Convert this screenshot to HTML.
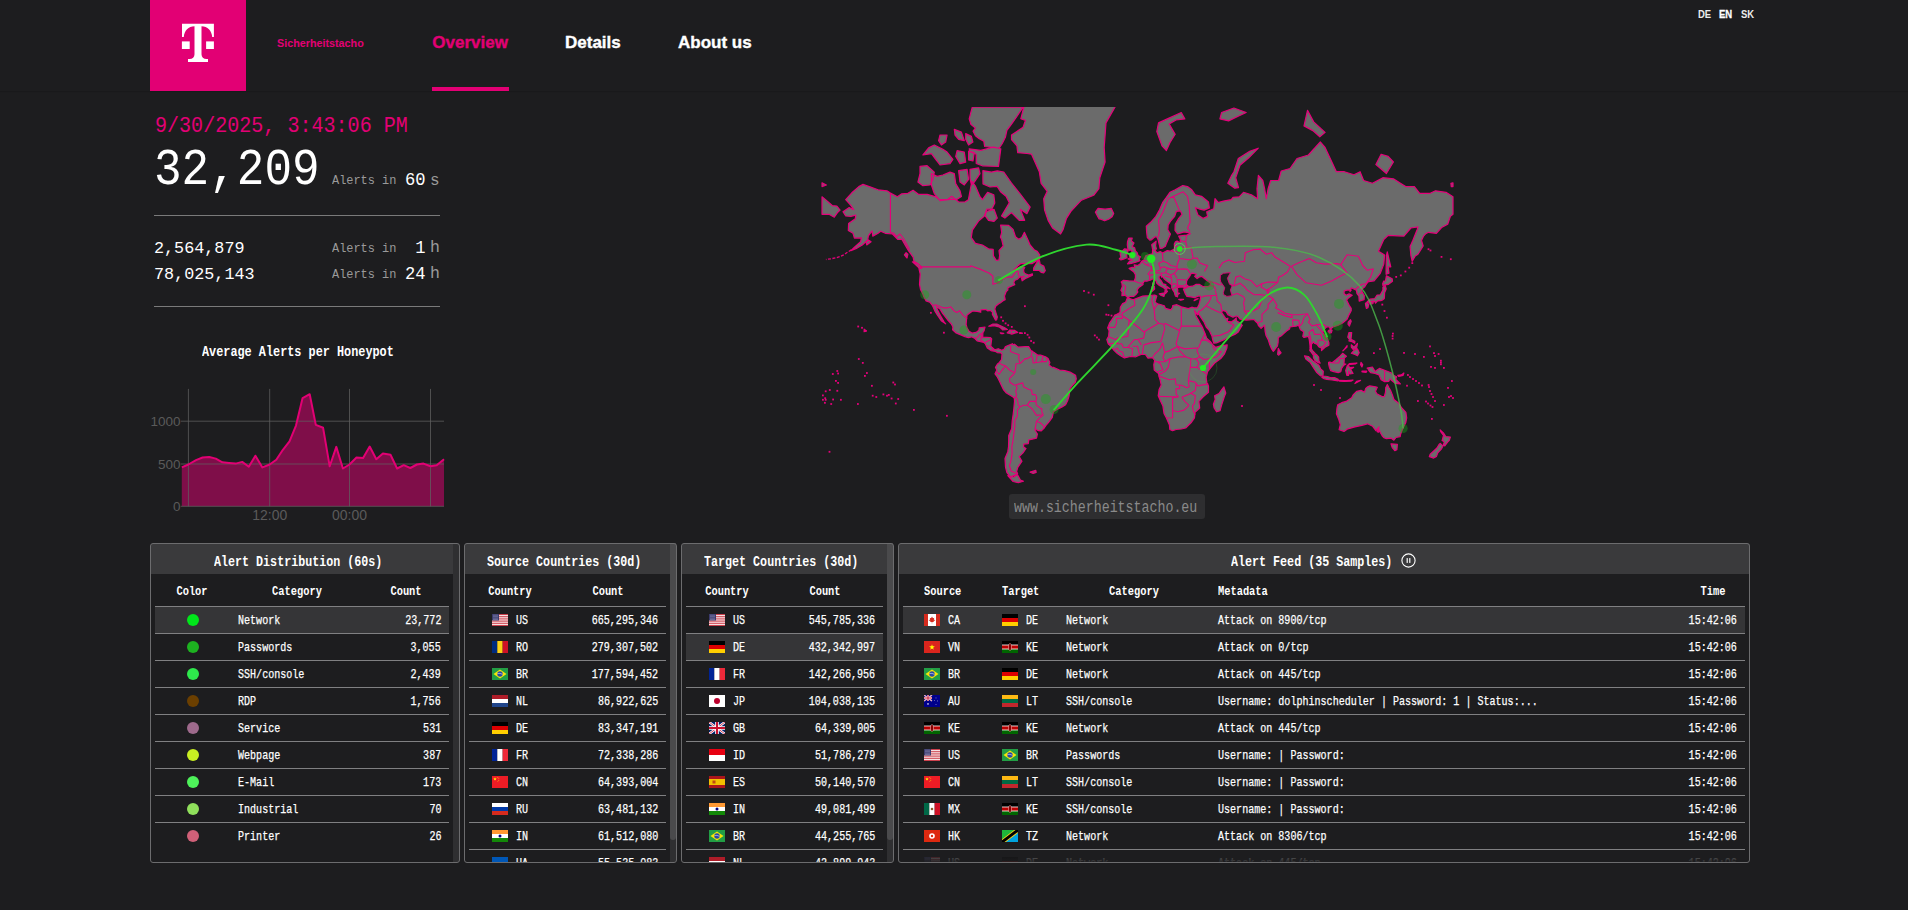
<!DOCTYPE html><html><head><meta charset="utf-8"><style>
*{margin:0;padding:0;box-sizing:border-box}
html,body{width:1908px;height:910px;overflow:hidden;background:#1d1d1f}
body{position:relative;font-family:"Liberation Mono",monospace;color:#fff}
.a{position:absolute;white-space:nowrap}
.sx{display:inline-block;transform-origin:0 0}
.sans{font-family:"Liberation Sans",sans-serif;font-weight:bold}
.hdr{position:absolute;left:0;top:0;width:1908px;height:91px;background:#1d1d1f;box-shadow:0 1px 1px rgba(0,0,0,.12)}
.panel{position:absolute;top:543px;height:319px;border:1.5px solid #6a6a6a;border-radius:3px;overflow:hidden;background:#1d1d1f}
.ph{position:absolute;left:0;top:0;height:31px;background:#3a3a3c}
.line{position:absolute;height:1.5px;background:#8a8a8a}
.hl{position:absolute;height:27px;background:#38383a}
</style></head><body>
<div class="hdr"></div>
<div class="a" style="left:150px;top:0;width:96px;height:91px;background:#e20074"></div>
<svg class="a" style="left:176px;top:18px" width="44" height="50" viewBox="0 0 44 50">
<path fill="#fff" d="M6,5.8H37.9V19H36.2C35.8,12.5 31.5,8.4 25.5,8.2V36.2C25.5,39.2 27.5,41 30.5,41H32V44H12V41H13.5C16.5,41 18.5,39.2 18.5,36.2V8.2C12.5,8.4 8.2,12.5 7.8,19H6Z"/>
<rect fill="#fff" x="5.9" y="23.4" width="7.8" height="7.6"/><rect fill="#fff" x="30.1" y="23.4" width="7.8" height="7.6"/>
</svg>
<div class="a" style="left:432px;top:87px;width:77px;height:4px;background:#e20074"></div>
<div class="a" style="left:276.50px;top:38.36px;font-size:11.5px;line-height:11.5px;color:#e20074;font-family:'Liberation Sans',sans-serif;font-weight:bold;"><span class="sx" style="transform:scaleX(0.936);transform-origin:0 0">Sicherheitstacho</span></div>
<div class="a" style="left:432.30px;top:34.41px;font-size:17px;line-height:17px;color:#e20074;font-family:'Liberation Sans',sans-serif;font-weight:bold;-webkit-text-stroke:.35px #e20074;">Overview</div>
<div class="a" style="left:565.00px;top:34.41px;font-size:17px;line-height:17px;color:#fff;font-family:'Liberation Sans',sans-serif;font-weight:bold;-webkit-text-stroke:.35px #fff;">Details</div>
<div class="a" style="left:678.00px;top:34.41px;font-size:17px;line-height:17px;color:#fff;font-family:'Liberation Sans',sans-serif;font-weight:bold;-webkit-text-stroke:.35px #fff;">About us</div>
<div class="a" style="left:1698.00px;top:8.79px;font-size:11px;line-height:11px;color:#ececec;font-family:'Liberation Sans',sans-serif;font-weight:bold;"><span class="sx" style="transform:scaleX(0.86);transform-origin:0 0">DE</span></div>
<div class="a" style="left:1719.20px;top:8.79px;font-size:11px;line-height:11px;color:#fff;font-family:'Liberation Sans',sans-serif;font-weight:bold;-webkit-text-stroke:.3px #fff;"><span class="sx" style="transform:scaleX(0.86);transform-origin:0 0">EN</span></div>
<div class="a" style="left:1740.50px;top:8.79px;font-size:11px;line-height:11px;color:#ececec;font-family:'Liberation Sans',sans-serif;font-weight:bold;"><span class="sx" style="transform:scaleX(0.86);transform-origin:0 0">SK</span></div>
<div class="a" style="left:154.50px;top:114.53px;font-size:22.8px;line-height:22.8px;color:#e20074;font-family:'Liberation Mono',monospace;font-weight:normal;"><span class="sx" style="transform:scaleX(0.88);transform-origin:0 0">9/30/2025, 3:43:06 PM</span></div>
<div class="a" style="left:154.10px;top:145.36px;font-size:52px;line-height:52px;color:#fff;font-family:'Liberation Mono',monospace;font-weight:normal;"><span class="sx" style="transform:scaleX(0.885);transform-origin:0 0">32,209</span></div>
<div class="a" style="left:332.00px;top:175.12px;font-size:12.9px;line-height:12.9px;color:#9a9a9a;font-family:'Liberation Mono',monospace;font-weight:normal;"><span class="sx" style="transform:scaleX(0.925);transform-origin:0 0">Alerts in</span></div>
<div class="a" style="left:404.50px;top:171.06px;font-size:18.2px;line-height:18.2px;color:#fff;font-family:'Liberation Mono',monospace;font-weight:normal;"><span class="sx" style="transform:scaleX(0.94);transform-origin:0 0">60</span></div>
<div class="a" style="left:430.00px;top:172.74px;font-size:16px;line-height:16px;color:#9a9a9a;font-family:'Liberation Mono',monospace;font-weight:normal;">s</div>
<div class="a" style="left:154px;top:215px;width:286px;height:1px;background:#7a7a7a"></div>
<div class="a" style="left:154.00px;top:239.55px;font-size:17.3px;line-height:17.3px;color:#fff;font-family:'Liberation Mono',monospace;font-weight:normal;"><span class="sx" style="transform:scaleX(0.97);transform-origin:0 0">2,564,879</span></div>
<div class="a" style="left:154.00px;top:265.75px;font-size:17.3px;line-height:17.3px;color:#fff;font-family:'Liberation Mono',monospace;font-weight:normal;"><span class="sx" style="transform:scaleX(0.97);transform-origin:0 0">78,025,143</span></div>
<div class="a" style="left:332.00px;top:242.82px;font-size:12.9px;line-height:12.9px;color:#9a9a9a;font-family:'Liberation Mono',monospace;font-weight:normal;"><span class="sx" style="transform:scaleX(0.925);transform-origin:0 0">Alerts in</span></div>
<div class="a" style="left:404.50px;top:238.76px;font-size:18.2px;line-height:18.2px;color:#fff;font-family:'Liberation Mono',monospace;font-weight:normal;"><span class="sx" style="transform:scaleX(0.94);transform-origin:0 0">&nbsp;1</span></div>
<div class="a" style="left:430.00px;top:240.06px;font-size:16.5px;line-height:16.5px;color:#9a9a9a;font-family:'Liberation Mono',monospace;font-weight:normal;">h</div>
<div class="a" style="left:332.00px;top:268.82px;font-size:12.9px;line-height:12.9px;color:#9a9a9a;font-family:'Liberation Mono',monospace;font-weight:normal;"><span class="sx" style="transform:scaleX(0.925);transform-origin:0 0">Alerts in</span></div>
<div class="a" style="left:404.50px;top:264.76px;font-size:18.2px;line-height:18.2px;color:#fff;font-family:'Liberation Mono',monospace;font-weight:normal;"><span class="sx" style="transform:scaleX(0.94);transform-origin:0 0">24</span></div>
<div class="a" style="left:430.00px;top:266.06px;font-size:16.5px;line-height:16.5px;color:#9a9a9a;font-family:'Liberation Mono',monospace;font-weight:normal;">h</div>
<div class="a" style="left:154px;top:306px;width:286px;height:1px;background:#7a7a7a"></div>
<div class="a" style="left:202.30px;top:345.26px;font-size:14.8px;line-height:14.8px;color:#fff;font-family:'Liberation Mono',monospace;font-weight:bold;"><span class="sx" style="transform:scaleX(0.8);transform-origin:0 0">Average Alerts per Honeypot</span></div>
<svg class="a" style="left:140px;top:380px" width="320" height="150" viewBox="0 0 320 150">
<path d="M41.8,87.4 L48.4,84.5 L56.0,80.1 L62.6,77.5 L69.2,77.0 L75.8,78.6 L82.4,82.3 L89.0,83.0 L95.6,83.6 L102.2,81.9 L108.8,86.7 L115.4,75.7 L122.4,87.4 L129.7,84.5 L136.3,79.7 L142.9,69.8 L149.5,61.4 L156.0,45.6 L162.6,18.1 L169.7,14.2 L175.8,44.9 L183.1,47.8 L189.7,86.3 L196.3,66.9 L202.9,88.5 L209.5,84.5 L216.5,77.5 L223.1,77.9 L229.7,66.5 L236.3,79.2 L242.9,73.5 L250.5,74.8 L257.1,88.5 L263.7,85.2 L270.3,88.0 L276.9,84.5 L283.5,83.6 L290.5,86.3 L296.7,85.2 L304.0,79.2 L304.0,126.30000000000001 L41.8,126.30000000000001 Z" fill="#e20074" fill-opacity=".5"/>
<line x1="48.400000000000006" y1="8.899999999999977" x2="48.400000000000006" y2="126.30000000000001" stroke="#606060" stroke-opacity=".75" stroke-width="1"/><line x1="129.7" y1="8.899999999999977" x2="129.7" y2="126.30000000000001" stroke="#606060" stroke-opacity=".75" stroke-width="1"/><line x1="209.5" y1="8.899999999999977" x2="209.5" y2="126.30000000000001" stroke="#606060" stroke-opacity=".75" stroke-width="1"/><line x1="290.5" y1="8.899999999999977" x2="290.5" y2="126.30000000000001" stroke="#606060" stroke-opacity=".75" stroke-width="1"/><line x1="40.69999999999999" y1="41.19999999999999" x2="304" y2="41.19999999999999" stroke="#606060" stroke-opacity=".75" stroke-width="1"/><line x1="40.69999999999999" y1="84" x2="304" y2="84" stroke="#606060" stroke-opacity=".75" stroke-width="1"/><line x1="40.69999999999999" y1="126.30000000000001" x2="304" y2="126.30000000000001" stroke="#606060" stroke-opacity=".75" stroke-width="1"/>
<path d="M41.8,87.4 L48.4,84.5 L56.0,80.1 L62.6,77.5 L69.2,77.0 L75.8,78.6 L82.4,82.3 L89.0,83.0 L95.6,83.6 L102.2,81.9 L108.8,86.7 L115.4,75.7 L122.4,87.4 L129.7,84.5 L136.3,79.7 L142.9,69.8 L149.5,61.4 L156.0,45.6 L162.6,18.1 L169.7,14.2 L175.8,44.9 L183.1,47.8 L189.7,86.3 L196.3,66.9 L202.9,88.5 L209.5,84.5 L216.5,77.5 L223.1,77.9 L229.7,66.5 L236.3,79.2 L242.9,73.5 L250.5,74.8 L257.1,88.5 L263.7,85.2 L270.3,88.0 L276.9,84.5 L283.5,83.6 L290.5,86.3 L296.7,85.2 L304.0,79.2" fill="none" stroke="#e20074" stroke-width="2" stroke-linejoin="round"/>
<g font-family="Liberation Sans" font-size="13.5" fill="#5a5a5a" text-anchor="end">
<text x="40.5" y="45.5">1000</text><text x="40.5" y="88.5">500</text><text x="40.5" y="131">0</text></g>
<g font-family="Liberation Sans" font-size="14" fill="#5a5a5a" text-anchor="middle">
<text x="129.7" y="140">12:00</text><text x="209.5" y="140">00:00</text></g>
</svg>
<svg class="a" style="left:815px;top:107px" width="645" height="385" viewBox="815 107 645 385">
<path d="M1023.8,107.1 1058.6,87.8 1084.9,77.5 1102.4,95.9 1116.5,104.5 1106.0,122.9 1104.2,147.5 1105.1,162.0 1099.8,177.7 1098.9,188.7 1093.7,195.3 1081.4,200.2 1070.9,211.4 1066.5,218.4 1063.0,229.8 1060.6,234.0 1052.5,228.0 1048.1,220.4 1044.6,210.1 1043.7,198.7 1047.2,191.3 1041.1,183.3 1039.3,171.7 1031.5,154.2 1026.9,153.5 1017.7,152.7 1016.9,145.8 1011.5,139.6 1011.5,135.0 1023.1,127.3 1025.4,120.4 1020.8,118.8Z M988.7,326.2 992.9,324.0 996.8,324.0 1001.7,326.4 1004.8,327.8 1007.4,329.4 1002.5,330.0 1001.3,328.5 999.0,326.8 994.1,325.7 990.3,326.2Z M1030.1,472.1 1035.8,470.4 1036.2,472.4 1033.2,473.5Z M906.1,252.7 907.9,254.2 907.0,258.0 904.4,254.8Z M1007.1,332.8 1009.9,330.0 1014.8,330.4 1017.8,332.4 1014.8,333.1 1011.8,334.1 1009.5,333.5Z M1000.3,332.8 1003.8,333.3 1002.9,333.7 1001.1,333.7Z M866.7,245.0 871.1,241.8 868.4,240.1 866.2,242.4Z M843.0,211.8 849.2,207.5 853.7,209.7 850.6,205.2 845.7,199.7 851.8,192.8 858.8,186.6 863.0,184.4 870.7,187.1 878.1,189.8 886.9,190.8 890.4,193.1 897.4,196.8 901.8,193.8 907.9,193.3 913.1,190.3 918.4,194.3 927.2,194.3 935.9,196.8 939.4,199.7 947.3,199.7 951.7,196.3 958.7,202.0 964.9,202.0 968.4,199.7 971.9,181.1 975.4,186.1 979.8,196.3 982.4,199.7 987.6,192.3 993.8,194.8 994.8,203.0 992.0,208.8 986.8,209.2 984.1,216.4 978.5,221.1 972.4,230.1 971.3,237.5 975.4,243.4 982.4,245.0 988.5,248.8 993.2,249.4 993.4,255.9 996.4,260.5 999.0,259.9 999.6,255.6 999.0,250.6 1003.2,246.0 1001.8,240.1 1000.4,237.1 1001.7,232.3 1000.6,225.0 1008.7,225.4 1013.1,229.4 1015.5,236.8 1018.7,239.2 1021.8,237.5 1024.4,232.3 1028.0,240.1 1030.1,245.0 1034.1,249.7 1037.1,251.2 1039.7,254.8 1039.9,258.2 1037.6,260.2 1032.3,263.6 1026.2,263.3 1020.9,263.6 1017.4,266.3 1013.9,270.0 1016.6,268.7 1020.9,266.5 1024.8,267.3 1023.6,269.7 1023.9,272.3 1025.3,273.8 1028.8,275.1 1032.3,273.8 1032.5,275.1 1026.2,278.1 1022.2,280.8 1021.5,278.3 1024.4,276.3 1019.7,276.8 1017.4,279.3 1014.5,280.5 1013.8,282.9 1014.8,284.8 1012.4,285.7 1008.0,287.6 1007.8,290.1 1006.2,291.5 1004.5,296.1 1005.2,299.6 1003.1,300.7 1001.0,302.4 998.7,303.8 995.7,306.3 994.8,309.0 996.2,313.6 997.3,317.0 996.6,319.9 995.4,320.1 994.1,317.4 992.4,314.4 992.5,312.2 990.3,310.4 987.6,310.8 985.9,309.6 983.3,309.6 980.6,310.0 980.8,312.2 977.1,311.4 972.7,311.0 970.1,312.8 967.1,315.0 966.6,318.8 966.1,324.5 967.1,328.1 969.1,331.3 971.9,333.1 976.2,332.4 978.9,330.1 979.2,327.9 985.0,327.0 984.1,330.7 982.9,332.6 982.7,337.2 986.8,337.4 990.3,337.5 991.7,339.0 991.1,343.5 990.8,346.2 994.7,349.8 998.2,348.7 1001.8,350.3 1004.3,349.0 1005.2,346.9 1007.4,345.7 1010.4,344.6 1012.5,343.7 1013.1,345.1 1014.5,344.2 1018.0,347.1 1021.8,346.9 1025.3,346.7 1028.8,346.7 1030.9,350.6 1034.1,352.4 1037.6,355.1 1041.1,355.2 1045.5,356.8 1048.1,358.6 1049.9,362.4 1049.0,365.1 1051.6,367.0 1053.4,367.4 1059.5,370.0 1064.8,370.7 1070.0,372.1 1075.6,375.3 1076.3,378.8 1075.3,382.3 1072.7,385.0 1070.0,388.6 1069.1,395.8 1067.7,400.5 1065.6,404.8 1062.1,407.0 1058.6,408.6 1053.4,411.8 1052.3,417.4 1049.0,421.8 1046.0,425.3 1043.7,428.6 1041.3,430.9 1038.5,430.7 1035.1,429.0 1035.1,430.3 1037.4,434.0 1036.5,438.2 1028.8,439.9 1028.3,443.6 1023.7,444.1 1023.6,446.9 1026.0,448.5 1023.0,452.9 1019.2,456.6 1022.0,461.2 1017.8,467.4 1016.6,471.5 1017.6,473.5 1014.8,475.0 1010.4,477.0 1006.9,472.7 1005.5,467.1 1005.0,458.4 1007.8,451.7 1008.5,446.9 1008.7,441.1 1008.7,435.5 1011.7,428.6 1012.2,420.8 1013.1,414.8 1013.9,408.0 1014.5,401.4 1014.3,398.2 1012.2,396.4 1006.0,392.7 1003.4,389.5 1001.7,385.9 999.0,380.2 997.3,377.0 995.0,373.8 996.8,370.0 995.5,367.4 997.3,364.2 999.4,362.4 1001.5,359.5 1002.0,354.2 1001.0,352.9 997.3,352.6 995.5,351.5 991.0,350.6 987.3,348.0 985.4,343.9 983.8,342.3 980.6,341.7 977.1,340.8 974.5,338.1 971.5,336.8 968.4,337.7 964.9,336.6 959.6,334.4 956.1,333.0 952.6,329.8 952.9,327.0 951.2,323.8 947.3,319.5 944.2,315.4 942.6,313.4 939.8,308.8 936.3,306.8 937.7,310.4 940.3,315.4 944.2,322.1 945.7,323.8 941.2,320.7 937.3,315.0 935.1,311.4 933.0,306.8 932.3,305.3 929.8,302.2 926.1,300.9 923.8,296.8 922.8,293.9 920.5,289.4 919.5,284.3 920.2,274.1 918.9,268.4 921.9,267.1 918.4,264.1 914.0,261.3 913.1,257.1 908.8,251.2 906.1,246.6 901.8,239.2 897.9,239.5 892.5,234.0 885.3,233.3 880.7,231.2 878.1,233.3 872.8,236.1 872.0,230.9 868.4,235.8 867.6,240.1 862.3,245.0 857.1,248.1 850.9,250.6 854.4,247.2 860.6,241.8 861.4,237.8 854.4,238.1 853.0,233.3 848.3,230.5 848.6,223.5 855.3,218.8 855.7,215.1 850.9,216.4 845.7,216.0Z M1045.3,270.7 1043.7,266.0 1040.2,264.4 1039.3,259.7 1036.7,262.7 1033.6,268.1 1033.6,270.5 1039.3,270.5 1041.1,272.3 1043.7,272.8Z M1019.7,332.6 1022.5,333.0 1022.2,333.5 1019.7,333.5Z M1017.3,474.4 1020.4,480.0 1023.4,481.2 1018.3,482.7 1013.1,481.5 1007.8,475.6 1013.9,477.0Z M912.4,261.9 918.4,264.1 921.4,268.4 918.9,267.9 914.9,264.1Z M1387.3,384.5 1389.0,387.7 1390.8,390.9 1392.4,394.9 1393.9,399.5 1398.7,403.3 1401.8,408.0 1405.9,412.4 1406.7,418.0 1405.7,422.8 1402.7,428.8 1400.6,434.4 1400.2,436.6 1396.0,437.5 1393.9,440.2 1391.3,438.2 1386.4,438.6 1383.8,437.7 1382.0,435.5 1380.3,432.5 1379.4,430.1 1378.5,432.2 1377.1,431.6 1378.5,429.0 1379.0,426.9 1375.9,430.7 1372.7,426.3 1367.5,423.8 1361.9,425.3 1354.9,426.9 1347.8,428.8 1344.0,431.4 1339.1,429.7 1340.3,424.6 1338.9,419.8 1336.4,413.8 1337.0,408.0 1337.7,404.8 1341.7,402.7 1346.1,401.4 1351.7,397.7 1353.1,394.9 1356.6,391.3 1361.0,390.4 1364.5,392.2 1365.7,388.4 1367.1,387.1 1369.8,385.9 1375.5,386.8 1377.3,387.3 1375.5,391.3 1376.8,393.7 1382.0,396.6 1384.3,396.6 1385.5,392.2 1385.7,387.7Z M1328.6,362.4 1329.8,362.1 1332.1,362.8 1335.6,360.0 1340.0,356.1 1342.6,353.3 1346.4,356.3 1344.3,358.1 1344.0,363.8 1345.9,364.0 1343.5,365.6 1341.7,368.2 1340.8,371.7 1338.2,372.6 1333.8,371.6 1330.7,370.7 1329.4,367.4 1328.6,363.8Z M822.0,196.8 827.3,201.1 832.5,205.7 836.9,206.1 840.1,210.1 837.8,212.2 834.3,217.2 829.0,214.3 822.0,214.3Z M1152.6,285.7 1154.2,284.3 1154.0,282.0 1152.6,283.2Z M1178.7,299.4 1183.6,299.4 1180.8,300.3Z M1194.1,300.7 1198.2,298.7 1195.3,299.4Z M1127.7,297.9 1126.5,296.1 1124.5,295.3 1121.9,295.7 1122.1,291.9 1120.9,290.3 1122.3,286.7 1121.9,283.2 1121.2,282.0 1123.5,280.3 1128.7,280.8 1134.3,281.0 1135.4,277.8 1135.4,274.6 1133.6,271.8 1129.1,268.4 1132.2,267.3 1134.7,267.6 1134.2,264.9 1137.9,265.5 1140.3,263.6 1141.9,261.1 1143.8,260.2 1145.7,255.9 1149.4,254.5 1152.4,253.9 1152.6,249.7 1151.7,244.7 1156.1,241.1 1155.6,246.0 1156.4,248.8 1155.0,250.3 1156.8,252.7 1160.3,251.5 1162.6,253.0 1167.3,250.6 1170.1,251.2 1172.4,250.0 1174.7,249.1 1174.3,244.1 1175.4,241.8 1177.1,241.1 1180.1,243.1 1180.3,239.2 1178.7,236.1 1186.6,235.1 1190.4,233.7 1188.3,232.6 1184.0,231.9 1177.6,234.0 1175.0,230.5 1175.2,224.2 1178.7,218.4 1182.0,214.3 1180.4,210.9 1176.4,211.4 1174.7,216.4 1170.8,220.8 1168.2,225.0 1167.8,229.8 1170.5,234.0 1166.4,243.4 1165.4,246.3 1162.6,248.1 1160.1,248.5 1159.4,245.0 1158.2,240.1 1156.8,236.8 1155.0,236.8 1151.5,239.8 1149.8,240.1 1147.3,237.5 1146.6,231.9 1146.3,226.1 1150.7,222.3 1155.9,216.4 1159.4,210.1 1162.9,202.0 1166.4,197.3 1169.9,192.3 1175.2,189.8 1182.7,185.5 1187.5,186.6 1191.8,189.8 1195.3,194.8 1201.5,196.3 1208.5,202.0 1209.4,207.9 1204.1,210.1 1198.9,208.8 1195.3,207.5 1198.0,215.1 1203.2,218.4 1207.6,216.4 1206.7,211.8 1213.8,208.8 1215.0,198.7 1218.1,202.5 1223.4,201.1 1231.3,199.7 1233.0,197.3 1239.2,196.8 1243.5,192.3 1251.4,194.8 1257.6,198.7 1257.0,188.7 1258.4,175.3 1262.8,180.5 1264.6,188.7 1266.3,198.7 1268.1,188.7 1270.7,180.5 1278.6,180.5 1281.2,171.0 1290.0,168.5 1297.0,158.5 1308.4,155.0 1320.3,141.9 1325.1,147.5 1336.4,171.7 1344.3,171.7 1354.0,174.7 1360.1,171.7 1363.6,180.5 1372.4,183.3 1382.9,177.7 1393.4,178.8 1400.4,183.3 1405.7,186.6 1414.4,186.6 1419.7,193.3 1430.2,193.3 1435.5,190.8 1446.0,192.3 1453.0,196.8 1453.0,214.3 1450.4,216.4 1447.7,224.2 1441.6,227.6 1436.4,233.3 1428.5,232.3 1425.8,233.7 1423.6,236.1 1421.5,240.5 1423.2,246.0 1418.0,254.2 1415.3,255.9 1412.2,261.3 1410.9,255.6 1410.1,246.6 1412.7,240.8 1417.1,229.8 1418.0,226.9 1410.9,228.0 1403.9,236.1 1397.8,235.8 1388.2,235.4 1383.8,239.5 1378.5,251.2 1384.6,255.1 1383.8,264.1 1380.3,273.3 1374.1,280.8 1368.5,281.7 1366.6,283.6 1364.8,286.7 1361.0,289.7 1364.3,295.7 1364.1,299.6 1359.2,301.1 1358.9,296.1 1357.0,293.7 1356.3,290.1 1351.3,287.8 1349.9,291.7 1351.2,290.1 1347.0,290.1 1344.3,290.8 1344.0,293.5 1346.1,295.3 1349.2,293.9 1352.2,295.3 1348.4,297.9 1346.6,300.0 1349.2,305.3 1351.2,308.4 1351.2,310.8 1348.7,315.4 1347.0,319.4 1342.6,323.0 1337.7,325.5 1332.9,327.0 1330.3,329.2 1329.4,327.0 1326.8,326.8 1324.4,329.2 1322.8,332.2 1324.5,335.4 1327.3,338.1 1328.9,342.6 1328.9,345.3 1325.1,347.3 1321.5,350.5 1321.5,348.0 1318.9,346.9 1316.8,344.1 1314.4,343.2 1313.7,341.7 1311.4,344.4 1311.4,348.9 1313.3,351.5 1315.4,353.7 1316.6,354.7 1318.7,357.2 1318.9,360.7 1320.1,363.1 1318.9,363.0 1315.1,360.7 1313.5,357.7 1313.3,355.1 1311.0,351.9 1309.8,350.6 1310.2,347.1 1309.3,339.9 1308.4,336.3 1304.0,337.5 1302.8,336.3 1303.7,331.7 1300.5,329.8 1299.3,327.0 1298.4,325.1 1296.1,326.1 1293.5,326.4 1290.0,327.0 1289.6,328.9 1286.5,331.1 1281.8,335.4 1278.3,337.5 1278.1,342.6 1277.4,346.2 1276.3,347.4 1274.6,349.9 1273.3,351.4 1271.6,348.9 1269.8,344.8 1268.3,339.9 1266.0,335.4 1265.1,331.3 1264.8,327.4 1264.6,325.1 1261.1,328.3 1258.4,325.5 1257.6,323.2 1255.5,321.3 1254.1,319.5 1246.2,320.1 1240.0,319.2 1237.9,316.4 1236.0,316.0 1233.0,317.2 1227.8,314.6 1226.0,311.4 1222.5,310.4 1221.6,312.4 1224.3,316.4 1226.0,318.8 1227.9,318.2 1227.2,321.3 1231.3,321.9 1234.8,319.4 1236.2,317.8 1236.4,320.7 1240.4,323.2 1242.3,325.3 1240.0,328.9 1238.3,331.9 1234.8,334.4 1229.5,336.8 1223.4,339.9 1216.4,343.0 1213.8,343.2 1212.5,339.0 1212.0,336.3 1209.4,330.7 1206.2,327.0 1204.1,322.2 1201.5,318.4 1198.9,314.4 1198.7,311.4 1197.6,314.8 1194.5,310.6 1196.2,316.4 1198.0,319.4 1200.1,323.2 1202.7,327.9 1205.0,333.5 1206.7,338.1 1210.2,341.4 1213.2,345.3 1215.5,347.3 1220.8,345.8 1227.2,344.8 1226.9,348.0 1224.3,354.2 1220.8,358.6 1214.6,363.0 1210.2,368.4 1207.6,371.7 1206.2,377.0 1206.7,382.3 1208.5,385.9 1208.5,392.2 1203.2,396.8 1198.9,401.4 1199.7,408.0 1195.0,412.4 1194.5,417.8 1191.0,422.8 1185.7,428.0 1181.3,429.0 1176.1,429.5 1172.6,430.7 1169.8,429.5 1169.4,424.9 1166.4,418.0 1164.1,413.8 1162.9,406.1 1160.3,400.5 1158.2,395.8 1159.1,389.5 1161.2,385.0 1160.3,380.6 1158.9,376.1 1158.5,373.5 1154.2,370.0 1153.8,364.7 1154.7,360.3 1152.4,357.7 1148.0,358.1 1145.4,354.5 1141.0,354.5 1135.8,356.8 1130.5,356.5 1124.4,357.9 1120.9,355.9 1117.3,353.5 1114.2,350.6 1111.2,346.6 1108.2,343.9 1106.8,339.5 1108.6,336.3 1109.1,330.7 1107.7,327.9 1109.5,323.2 1112.1,319.4 1114.7,315.4 1120.0,312.4 1120.3,307.4 1122.6,303.6 1125.6,302.2 1127.2,298.3 1128.2,298.1 1133.1,299.8 1137.5,298.1 1142.8,296.1 1148.9,295.7 1154.7,295.0 1156.8,296.1 1155.9,299.0 1155.0,302.2 1157.7,303.8 1160.3,304.5 1164.3,305.7 1165.5,308.4 1170.8,309.8 1172.6,307.4 1172.7,305.7 1176.9,304.7 1181.3,306.8 1188.3,308.6 1191.8,307.2 1194.1,307.8 1197.4,307.8 1198.9,304.7 1199.7,302.2 1200.4,299.0 1200.6,296.1 1198.0,296.1 1194.5,297.7 1191.0,296.8 1186.9,296.4 1185.4,293.9 1184.0,290.6 1183.4,289.0 1185.7,288.1 1188.3,286.7 1192.7,286.2 1196.2,284.3 1199.2,284.3 1203.2,286.7 1207.6,286.7 1210.2,285.5 1210.4,282.9 1207.6,281.0 1204.1,278.3 1201.7,276.3 1199.7,276.8 1197.1,278.6 1194.6,276.3 1196.4,274.3 1192.7,273.1 1191.3,273.3 1189.6,276.6 1187.8,278.8 1186.6,281.2 1186.4,284.3 1188.3,286.2 1186.6,286.7 1184.0,287.6 1183.1,287.1 1179.6,287.1 1177.8,287.8 1177.1,287.8 1177.8,290.1 1177.6,292.8 1179.6,293.3 1177.8,294.6 1177.5,296.8 1175.5,296.1 1174.8,294.2 1174.3,292.2 1172.9,290.1 1171.7,287.8 1171.7,284.8 1169.9,283.2 1166.4,280.8 1164.1,278.8 1162.9,276.6 1161.7,277.3 1161.5,275.3 1159.1,276.3 1159.1,278.3 1161.3,280.8 1162.9,283.9 1165.9,284.6 1165.5,285.5 1167.3,286.7 1169.9,288.8 1167.3,287.8 1166.4,290.1 1167.5,291.3 1165.5,293.5 1164.8,292.8 1165.2,289.0 1162.6,287.1 1159.4,285.5 1156.8,283.2 1155.9,280.8 1153.3,278.6 1150.7,280.0 1146.8,281.2 1144.5,280.8 1142.9,283.4 1143.1,284.6 1141.4,285.7 1138.9,287.4 1137.0,290.1 1137.9,291.9 1136.1,294.4 1133.8,296.4 1129.8,296.4 1128.0,297.7Z M1339.1,380.4 1346.1,380.6 1353.1,380.0 1351.3,381.1 1344.3,381.4 1339.4,381.1Z M1219.9,118.9 1228.6,120.9 1239.2,115.8 1246.2,112.5 1233.9,108.0 1221.6,112.5Z M1127.5,263.8 1131.4,263.3 1135.8,262.2 1140.0,260.8 1139.1,259.1 1140.5,256.8 1138.0,255.4 1137.2,252.7 1135.4,250.9 1134.7,247.8 1132.2,246.6 1134.0,243.1 1131.4,241.1 1132.2,238.1 1128.7,238.1 1127.5,241.8 1127.3,245.0 1127.9,248.8 1128.9,250.3 1131.5,250.0 1132.1,252.7 1132.2,254.5 1129.4,254.8 1130.1,257.7 1128.2,259.1 1132.2,260.2 1129.6,261.1Z M1328.0,331.1 1329.4,333.1 1331.4,332.6 1332.1,330.2 1330.7,329.6 1328.9,330.2Z M1361.0,362.4 1362.7,364.7 1361.9,367.0 1360.6,364.7Z M864.1,331.7 866.2,330.7 864.2,329.2Z M1382.9,285.5 1385.0,284.8 1388.5,284.3 1392.5,281.2 1392.2,278.8 1386.4,275.8 1385.5,280.8 1383.6,281.2 1382.7,283.6Z M1366.9,302.2 1369.8,299.2 1374.7,298.5 1377.1,295.0 1380.3,294.8 1382.9,290.1 1382.9,287.1 1385.3,285.7 1386.2,289.0 1384.6,292.8 1384.5,295.9 1384.3,298.5 1382.5,300.0 1380.8,300.7 1377.6,300.9 1375.5,303.2 1374.5,301.1 1371.5,301.3 1368.0,302.4Z M1098.9,218.8 1095.4,212.2 1098.1,208.3 1105.1,209.2 1111.2,208.3 1113.7,213.5 1112.1,216.8 1108.6,219.2 1104.6,220.8 1100.7,219.2Z M1127.0,258.0 1126.6,254.5 1127.9,251.2 1126.6,249.1 1124.4,248.8 1122.6,250.9 1120.0,252.1 1120.3,254.5 1120.9,257.1 1119.3,258.8 1120.9,259.9 1123.5,259.1 1126.3,258.0Z M1321.9,377.5 1323.3,376.0 1327.3,376.5 1331.2,377.7 1335.0,377.7 1338.2,379.3 1338.0,380.9 1332.1,380.0 1326.8,379.3 1323.8,378.6Z M1365.4,303.2 1367.1,302.4 1368.7,304.3 1368.0,307.6 1366.4,308.4 1365.7,305.3Z M1347.8,337.2 1348.9,332.6 1351.7,332.6 1351.3,336.3 1351.0,339.4 1354.9,341.2 1354.7,343.3 1352.2,341.7 1348.9,341.0 1349.4,339.5Z M1223.9,386.8 1225.8,393.1 1224.3,396.8 1221.6,405.1 1220.1,410.7 1216.7,411.8 1214.1,408.0 1213.4,404.2 1215.2,399.5 1214.6,395.8 1219.0,393.5 1221.6,389.8Z M1351.3,353.3 1354.0,350.5 1357.5,348.9 1359.2,352.8 1357.5,355.8 1354.9,354.5Z M1397.8,375.3 1401.3,374.9 1403.9,373.0 1403.1,375.4 1398.7,376.5Z M1367.1,368.1 1372.4,367.0 1375.0,371.4 1379.4,368.4 1384.6,370.2 1391.7,373.0 1393.4,375.4 1396.6,376.7 1395.7,379.3 1400.4,383.9 1395.2,383.4 1389.9,379.0 1388.7,381.4 1384.6,381.6 1381.1,379.8 1379.0,374.9 1375.0,373.5 1370.6,372.6 1368.9,370.5 1367.6,368.2Z M1375.9,164.6 1386.4,173.5 1393.4,162.0 1388.2,156.4 1381.1,154.2Z M1227.8,183.3 1234.8,188.2 1238.5,187.7 1235.7,177.7 1240.0,165.3 1248.8,157.8 1258.3,148.2 1249.7,151.3 1238.3,158.5 1233.9,171.7 1231.3,175.9Z M1440.2,429.9 1443.4,432.9 1445.8,436.6 1450.4,437.0 1449.3,440.4 1447.6,442.2 1444.8,445.9 1443.5,445.0 1444.2,441.8 1442.1,440.6 1443.5,435.5 1440.7,431.6Z M1440.2,443.4 1443.0,445.9 1441.3,449.2 1437.8,452.9 1436.5,456.4 1433.7,458.1 1429.3,456.6 1430.2,454.1 1432.9,451.7 1436.9,448.0 1439.0,444.5Z M1342.9,350.8 1347.0,347.1 1347.1,345.7 1344.0,349.8Z M1386.1,274.3 1389.0,273.3 1388.2,266.8 1390.8,266.8 1388.5,257.1 1387.3,251.8 1386.4,255.6 1386.1,268.1Z M1152.2,291.3 1154.7,289.0 1154.3,286.2 1151.9,286.9Z M1361.9,371.2 1366.8,371.2 1366.2,372.3 1362.2,371.9Z M1304.0,125.9 1312.8,130.6 1319.8,136.8 1325.1,132.4 1313.7,121.9 1307.5,110.3Z M1369.8,303.8 1372.9,303.6 1373.4,301.7 1370.6,302.0Z M1159.2,293.9 1164.8,292.8 1164.0,296.4 1161.2,295.5Z M1277.6,354.2 1278.3,348.3 1279.5,350.6 1281.1,352.8 1278.8,355.2Z M1346.8,375.3 1348.5,375.4 1348.9,370.9 1349.9,374.0 1353.1,373.5 1350.5,369.1 1353.6,367.4 1349.6,367.7 1348.2,364.7 1355.7,363.8 1357.0,363.0 1349.6,363.5 1347.3,365.6 1345.7,370.5Z M1304.5,355.8 1308.4,356.5 1313.3,361.2 1318.9,365.2 1320.7,368.9 1323.3,371.2 1323.0,375.8 1320.7,376.0 1316.8,372.6 1313.3,367.4 1310.3,362.6 1305.8,359.1Z M1156.8,131.5 1162.0,145.9 1166.4,150.5 1169.9,142.7 1175.2,134.2 1169.1,123.9 1176.1,119.9 1184.8,118.9 1181.3,112.5 1167.3,118.9 1158.5,122.9Z M1348.0,324.2 1349.4,326.1 1351.2,321.3 1350.5,319.7 1348.2,322.2Z M1391.0,443.8 1397.4,444.3 1396.9,449.7 1394.8,450.7 1392.2,447.6Z M1354.9,383.6 1360.5,380.4 1356.6,381.4Z M1351.3,344.8 1354.0,347.1 1357.5,343.5 1356.6,348.0 1353.1,349.4 1351.3,347.1Z M1450.9,183.3 1453.0,182.8 1453.0,186.6 1451.3,186.6Z M822.0,182.8 826.4,185.0 822.0,186.6Z M920.0,166.4 927.1,165.7 934.3,172.1 932.9,179.3 930.0,185.0 922.9,185.7 917.9,182.1 920.0,173.6Z M931.4,173.6 937.1,176.4 942.9,175.0 950.0,172.1 954.3,173.6 955.7,183.6 960.0,190.7 961.4,196.4 957.1,199.3 950.0,199.3 940.0,200.7 934.3,193.6 931.4,185.0Z M958.6,170.7 967.1,169.3 968.6,179.3 964.3,185.0 960.0,182.1Z M970.0,169.3 978.6,167.9 980.0,173.6 974.3,182.1 971.4,185.0 970.0,177.9Z M934.3,145.0 942.9,149.3 947.1,152.1 952.9,159.3 950.0,163.6 940.0,165.0 935.7,159.3 931.4,153.6 922.9,155.0 928.6,147.9Z M940.0,135.0 947.1,135.0 945.7,142.1 941.4,145.0 938.6,140.7Z M954.3,129.3 961.4,132.1 964.3,140.7 958.6,139.3 955.0,135.0Z M965.7,133.6 971.4,136.4 972.9,142.1 968.6,145.0 965.7,139.3Z M957.1,150.7 964.3,152.1 965.7,162.1 960.0,163.6 955.7,156.4Z M968.6,151.0 974.3,152.5 973.0,161.0 968.6,160.0Z M972.3,107.1 1023.1,107.1 1016.9,116.5 1011.5,124.2 1006.9,130.4 1005.4,137.3 1002.3,143.5 999.2,148.1 984.6,146.5 983.8,141.2 979.2,138.8 975.4,135.8 973.1,131.2 975.4,128.1 970.8,124.2 969.2,118.8 970.8,112.7Z M969.2,148.8 980.8,150.4 993.8,147.0 1000.8,148.8 998.5,166.5 982.3,165.8 976.2,163.5 976.2,154.2 970.0,151.8Z M982.9,170.7 991.4,172.1 997.3,170.9 1003.8,172.0 1011.5,183.0 1020.3,194.0 1030.2,207.1 1026.9,213.7 1020.3,209.3 1024.7,220.3 1019.2,220.3 1011.5,212.6 1004.9,218.1 1001.6,215.9 1009.3,202.7 1006.0,196.2 1000.5,191.8 997.0,186.3 990.0,187.0 983.0,184.0 982.9,179.0Z M986.3,211.5 994.0,209.3 997.3,218.1 994.0,221.4 988.5,220.3 985.2,215.9Z" fill="#6b6b6b" stroke="#e5007a" stroke-width="1.2" stroke-linejoin="round"/>
<path d="M1223.4,273.3 1230.4,272.6 1227.4,278.3 1229.5,284.3 1232.2,285.5 1230.4,290.1 1232.0,295.7 1226.9,296.4 1223.4,294.4 1223.4,292.4 1224.8,287.8 1222.5,284.3 1220.8,282.0 1220.2,279.1 1220.4,275.3Z" fill="#1d1d1f" stroke="#e5007a" stroke-width="0.9"/>
<g fill="#e5007a"><rect x="857.3" y="325.6" width="1.8" height="1.8"/><rect x="861.1" y="326.9" width="1.8" height="1.8"/><rect x="864.9" y="330.1" width="1.8" height="1.8"/><rect x="857.9" y="358.1" width="1.8" height="1.8"/><rect x="861.9" y="362.0" width="1.8" height="1.8"/><rect x="866.0" y="372.1" width="1.8" height="1.8"/><rect x="864.0" y="375.0" width="1.8" height="1.8"/><rect x="836.4" y="370.1" width="1.8" height="1.8"/><rect x="837.2" y="372.6" width="1.8" height="1.8"/><rect x="831.9" y="373.1" width="1.8" height="1.8"/><rect x="835.0" y="380.0" width="1.8" height="1.8"/><rect x="837.2" y="382.0" width="1.8" height="1.8"/><rect x="828.9" y="389.1" width="1.8" height="1.8"/><rect x="824.8" y="390.4" width="1.8" height="1.8"/><rect x="836.4" y="389.9" width="1.8" height="1.8"/><rect x="822.0" y="394.5" width="1.8" height="1.8"/><rect x="824.3" y="397.3" width="1.8" height="1.8"/><rect x="824.8" y="398.9" width="1.8" height="1.8"/><rect x="822.0" y="398.9" width="1.8" height="1.8"/><rect x="832.2" y="398.6" width="1.8" height="1.8"/><rect x="840.0" y="398.9" width="1.8" height="1.8"/><rect x="824.0" y="401.9" width="1.8" height="1.8"/><rect x="830.3" y="403.1" width="1.8" height="1.8"/><rect x="857.0" y="403.1" width="1.8" height="1.8"/><rect x="871.0" y="384.9" width="1.8" height="1.8"/><rect x="892.4" y="381.6" width="1.8" height="1.8"/><rect x="894.1" y="383.6" width="1.8" height="1.8"/><rect x="871.8" y="394.8" width="1.8" height="1.8"/><rect x="875.4" y="396.1" width="1.8" height="1.8"/><rect x="882.5" y="393.5" width="1.8" height="1.8"/><rect x="886.1" y="394.8" width="1.8" height="1.8"/><rect x="887.9" y="394.0" width="1.8" height="1.8"/><rect x="890.7" y="397.6" width="1.8" height="1.8"/><rect x="897.3" y="398.1" width="1.8" height="1.8"/><rect x="894.9" y="402.6" width="1.8" height="1.8"/><rect x="913.0" y="409.0" width="1.8" height="1.8"/><rect x="946.0" y="414.9" width="1.8" height="1.8"/><rect x="828.6" y="450.9" width="1.8" height="1.8"/><rect x="943.0" y="331.8" width="1.8" height="1.8"/><rect x="930.0" y="311.9" width="1.8" height="1.8"/><rect x="1392.0" y="332.7" width="1.8" height="1.8"/><rect x="1391.7" y="335.1" width="1.8" height="1.8"/><rect x="1391.7" y="337.7" width="1.8" height="1.8"/><rect x="1379.1" y="348.1" width="1.8" height="1.8"/><rect x="1373.0" y="352.2" width="1.8" height="1.8"/><rect x="1403.1" y="352.0" width="1.8" height="1.8"/><rect x="1414.1" y="353.1" width="1.8" height="1.8"/><rect x="1423.0" y="356.0" width="1.8" height="1.8"/><rect x="1429.1" y="345.5" width="1.8" height="1.8"/><rect x="1433.1" y="352.2" width="1.8" height="1.8"/><rect x="1437.7" y="353.1" width="1.8" height="1.8"/><rect x="1434.1" y="355.1" width="1.8" height="1.8"/><rect x="1440.0" y="359.8" width="1.8" height="1.8"/><rect x="1440.0" y="361.6" width="1.8" height="1.8"/><rect x="1440.0" y="363.4" width="1.8" height="1.8"/><rect x="1430.1" y="366.0" width="1.8" height="1.8"/><rect x="1434.1" y="367.0" width="1.8" height="1.8"/><rect x="1443.0" y="367.0" width="1.8" height="1.8"/><rect x="1451.0" y="380.1" width="1.8" height="1.8"/><rect x="1447.1" y="387.0" width="1.8" height="1.8"/><rect x="1427.7" y="384.1" width="1.8" height="1.8"/><rect x="1428.1" y="386.1" width="1.8" height="1.8"/><rect x="1429.1" y="390.1" width="1.8" height="1.8"/><rect x="1430.6" y="393.1" width="1.8" height="1.8"/><rect x="1432.1" y="396.1" width="1.8" height="1.8"/><rect x="1434.1" y="400.1" width="1.8" height="1.8"/><rect x="1448.1" y="396.1" width="1.8" height="1.8"/><rect x="1450.1" y="395.1" width="1.8" height="1.8"/><rect x="1452.1" y="397.1" width="1.8" height="1.8"/><rect x="1417.0" y="400.1" width="1.8" height="1.8"/><rect x="1425.1" y="400.6" width="1.8" height="1.8"/><rect x="1427.1" y="402.6" width="1.8" height="1.8"/><rect x="1429.6" y="404.6" width="1.8" height="1.8"/><rect x="1431.6" y="406.1" width="1.8" height="1.8"/><rect x="1443.0" y="404.1" width="1.8" height="1.8"/><rect x="1431.0" y="418.0" width="1.8" height="1.8"/><rect x="1407.0" y="374.1" width="1.8" height="1.8"/><rect x="1409.1" y="376.1" width="1.8" height="1.8"/><rect x="1412.1" y="378.1" width="1.8" height="1.8"/><rect x="1415.1" y="380.1" width="1.8" height="1.8"/><rect x="1418.1" y="382.1" width="1.8" height="1.8"/><rect x="1421.1" y="384.6" width="1.8" height="1.8"/><rect x="1406.1" y="384.8" width="1.8" height="1.8"/><rect x="1083.1" y="290.1" width="1.8" height="1.8"/><rect x="1087.7" y="291.7" width="1.8" height="1.8"/><rect x="1092.9" y="293.8" width="1.8" height="1.8"/><rect x="1024.0" y="305.3" width="1.8" height="1.8"/><rect x="1107.5" y="304.3" width="1.8" height="1.8"/><rect x="1105.4" y="313.7" width="1.8" height="1.8"/><rect x="1107.6" y="314.1" width="1.8" height="1.8"/><rect x="1110.6" y="314.7" width="1.8" height="1.8"/><rect x="1093.9" y="334.5" width="1.8" height="1.8"/><rect x="1096.1" y="336.6" width="1.8" height="1.8"/><rect x="1098.1" y="338.7" width="1.8" height="1.8"/><rect x="1241.1" y="405.1" width="1.8" height="1.8"/><rect x="1395.3" y="276.0" width="1.8" height="1.8"/><rect x="1399.9" y="274.5" width="1.8" height="1.8"/><rect x="1404.5" y="270.6" width="1.8" height="1.8"/><rect x="1408.3" y="266.8" width="1.8" height="1.8"/><rect x="1411.4" y="262.2" width="1.8" height="1.8"/><rect x="1427.6" y="248.3" width="1.8" height="1.8"/><rect x="1429.6" y="249.6" width="1.8" height="1.8"/><rect x="1440.6" y="256.0" width="1.8" height="1.8"/><rect x="1449.9" y="258.3" width="1.8" height="1.8"/><rect x="1381.4" y="303.7" width="1.8" height="1.8"/><rect x="1386.0" y="316.8" width="1.8" height="1.8"/><rect x="1383.6" y="310.1" width="1.8" height="1.8"/><rect x="1000.3" y="316.4" width="1.8" height="1.8"/><rect x="1002.1" y="319.9" width="1.8" height="1.8"/><rect x="1004.7" y="322.5" width="1.8" height="1.8"/><rect x="1007.3" y="324.3" width="1.8" height="1.8"/><rect x="1010.9" y="326.0" width="1.8" height="1.8"/><rect x="1024.0" y="332.2" width="1.8" height="1.8"/><rect x="1026.7" y="333.9" width="1.8" height="1.8"/><rect x="1028.4" y="336.6" width="1.8" height="1.8"/><rect x="1030.2" y="340.1" width="1.8" height="1.8"/><rect x="1032.8" y="341.8" width="1.8" height="1.8"/><rect x="1339.1" y="397.1" width="1.8" height="1.8"/><rect x="1313.1" y="384.1" width="1.8" height="1.8"/><rect x="1320.1" y="389.1" width="1.8" height="1.8"/></g>
<path d="M851.3,249.9 L847,252.5 L844,254.7 L840,256.5 L836.8,257.6 L831,258.8 L825.9,259.5" fill="none" stroke="#e5007a" stroke-width="1.3" stroke-dasharray="3 1.5"/><!--ALEUT-->
<path d="M890.4,193.1 890.4,232.3 893.9,233.3 896.5,236.8 900.0,234.0 903.5,238.5 907.9,246.6 909.6,249.7 M921.4,266.8 970.6,266.8 970.6,265.7 980.6,269.4 989.4,273.3 992.9,276.3 992.9,284.3 999.0,282.4 998.7,281.0 1003.4,279.1 1006.0,277.1 1012.2,277.1 1014.8,273.3 1016.2,271.0 1018.0,271.3 1018.7,275.3 1020.1,277.6 M932.3,305.3 936.5,304.9 942.9,307.8 947.9,307.8 950.8,306.8 954.3,311.2 957.0,312.4 959.6,310.8 963.1,315.4 967.1,318.6 M975.9,339.9 976.2,337.2 978.0,337.0 979.1,334.8 981.3,333.9 982.7,332.6 M981.3,333.9 981.2,337.4 982.9,337.7 M981.2,337.4 980.8,340.1 983.6,341.9 M984.5,342.8 988.5,340.8 991.7,339.0 M990.8,346.2 987.3,346.0 M992.2,348.7 992.4,351.0 M1010.8,346.0 1010.4,351.5 1014.8,353.3 1019.2,354.7 1018.7,357.7 1019.5,362.1 1020.2,363.5 M1032.3,350.6 1031.1,356.5 1027.4,358.6 1025.3,358.6 1020.2,363.5 M1037.2,355.2 1035.8,363.0 M1042.9,355.6 1042.0,361.6 M1032.3,356.5 1033.2,363.0 1038.5,362.3 1042.0,361.6 1046.4,361.6 1047.1,358.2 M999.4,363.1 1002.5,364.9 1005.5,365.8 M1005.5,365.8 1009.5,370.0 1014.8,373.0 M1014.8,373.0 1015.7,367.4 1016.0,363.8 1020.2,363.5 M996.8,371.6 999.0,374.4 1000.8,371.7 1005.5,365.8 M1014.8,373.0 1009.5,378.4 1009.9,382.3 1013.9,385.0 1015.7,385.0 M1015.7,385.0 1017.1,387.7 1015.7,391.3 1016.6,394.9 1015.7,396.8 1014.1,398.2 M1015.7,385.0 1022.7,382.9 1023.6,386.8 1028.8,389.5 1031.5,390.0 1032.3,394.6 1035.5,394.6 1036.7,397.7 1035.8,401.4 M1015.7,396.8 1017.4,399.5 1018.3,405.1 1020.1,406.7 M1020.1,406.7 1023.6,405.3 1027.4,405.1 M1027.4,405.1 1029.7,401.4 1035.8,401.4 M1020.1,406.7 1017.4,409.9 1017.4,415.8 1014.8,420.8 1014.8,426.9 1013.9,433.3 1013.1,439.9 1011.8,446.9 1012.2,452.9 1011.3,459.2 1009.5,465.7 1011.3,471.3 1016.6,473.2 M1027.4,405.1 1032.3,409.0 1036.5,415.4 1041.8,414.8 M1035.8,401.4 1036.4,405.1 1040.2,408.0 1041.8,409.0 1041.8,412.0 M1041.8,412.0 1043.2,415.0 1039.7,417.8 1036.5,421.2 M1036.5,421.2 1035.5,426.9 1035.1,429.0 M1036.5,421.2 1040.2,422.8 1043.7,425.9 1043.9,428.4 M1134.3,299.8 1134.9,305.3 1131.2,307.2 1122.3,313.0 1122.3,315.0 1114.4,315.0 M1122.3,315.8 1122.3,318.4 1116.5,318.4 1116.5,323.2 1114.7,327.4 1107.7,327.4 M1122.3,315.8 1129.1,320.3 1139.6,328.3 1143.3,331.7 1145.0,331.3 M1129.1,320.3 1127.9,336.3 1117.3,338.1 1116.1,339.7 1108.6,336.8 M1152.6,295.9 1151.9,301.1 1154.2,309.8 M1154.2,309.8 1155.0,319.4 1158.5,323.2 M1145.0,331.3 1158.5,323.2 M1157.7,304.1 1155.4,307.0 1154.2,309.8 M1181.3,307.2 1181.3,326.1 M1181.3,326.1 1179.6,329.8 1179.6,330.7 M1179.6,330.7 1165.5,323.4 1163.8,324.2 M1163.8,324.2 1158.5,323.2 M1181.3,326.1 1202.2,326.1 M1145.0,331.3 1143.6,338.1 1137.9,339.2 M1137.9,339.2 1134.0,339.9 1127.9,347.1 M1163.8,324.2 1164.7,328.9 1161.2,340.8 M1143.8,344.9 1151.5,342.6 1161.3,341.4 M1179.6,330.7 1176.9,340.8 1176.1,343.5 1177.5,346.4 M1177.5,346.4 1169.9,350.6 1164.7,352.4 M1164.7,352.4 1162.9,344.4 1162.4,342.6 M1177.5,346.4 1184.8,348.9 1196.2,348.0 1197.6,348.3 M1205.2,333.5 1201.5,340.3 M1201.5,340.3 1198.9,347.1 1197.6,348.3 M1197.6,348.3 1197.1,351.5 1199.7,356.8 M1199.7,356.8 1196.2,358.9 1191.0,358.9 M1191.0,358.9 1185.7,356.8 1179.6,350.6 1177.5,346.4 M1185.7,356.8 1179.6,356.8 1170.1,358.6 1165.5,361.2 M1164.7,352.4 1162.9,357.7 1165.5,361.6 M1212.5,346.2 1214.6,349.8 1221.3,351.5 1216.4,356.8 1210.2,358.6 M1210.2,358.6 1204.1,359.5 1199.7,356.8 M1201.5,340.3 1205.9,339.9 1211.6,343.5 M1209.4,358.6 1209.4,368.6 M1206.2,373.8 1197.1,367.4 M1197.1,367.4 1198.9,363.0 1196.2,358.9 M1190.1,367.4 1191.0,358.9 M1197.1,367.4 1190.1,367.4 M1170.1,358.6 1168.2,367.4 1165.5,370.9 1159.4,374.4 M1158.9,376.1 1166.4,378.8 1169.1,379.7 1175.2,378.8 1176.1,385.0 1179.6,385.0 M1179.6,385.0 1182.2,385.5 1186.6,387.7 1189.2,386.8 1188.3,380.6 M1188.3,380.6 1189.2,374.4 1190.1,367.4 M1188.3,380.6 1195.3,382.3 1198.0,385.9 1208.3,383.9 M1158.2,396.4 1172.6,396.8 1178.5,396.9 M1179.6,385.0 1179.6,388.6 1176.1,388.6 1176.1,394.0 1178.5,396.9 M1181.8,397.3 1187.5,394.9 1190.8,393.3 M1190.8,393.3 1195.3,390.4 1196.2,384.1 M1190.8,393.3 1195.3,395.8 1194.5,403.3 1192.4,405.9 M1192.4,405.9 1193.6,411.8 1195.2,414.6 M1172.6,405.1 1172.6,410.5 M1178.5,396.9 1172.6,397.7 1172.6,405.1 M1166.4,418.0 1172.6,417.8 1172.6,410.5 M1172.6,410.5 1177.8,411.8 1184.0,410.1 1189.0,405.3 M1189.0,405.3 1184.8,401.4 1181.8,397.3 M1108.6,336.8 1116.1,339.7 M1116.1,339.7 1117.5,343.7 M1117.5,343.7 1113.5,343.3 1108.2,343.9 M1117.5,343.7 1121.7,343.9 1123.5,347.6 M1114.2,349.8 1117.3,348.2 1119.1,351.0 1122.6,352.1 M1124.4,357.9 1122.6,352.1 M1123.5,347.6 1127.9,347.3 1132.6,348.7 M1132.6,348.7 1131.9,356.6 M1139.6,354.9 1137.5,346.2 M1132.6,346.2 1137.5,346.2 M1137.9,339.2 1141.4,344.9 M1142.2,354.4 1143.8,344.9 M1152.4,357.7 1155.0,353.7 1158.5,350.6 1160.3,348.0 1162.4,342.6 M1154.7,361.6 1157.3,361.7 1165.5,361.7 M1157.3,361.7 1160.3,363.8 1162.9,370.0 1157.7,371.7 M1125.2,295.3 1124.4,292.4 1125.2,290.1 1125.6,286.7 1123.1,284.3 M1134.3,281.0 1138.4,282.7 1143.1,283.4 M1141.9,261.1 1144.9,264.1 1147.7,265.5 1151.9,266.8 1150.7,270.5 1148.0,274.1 1149.8,275.1 1149.4,279.5 1150.7,280.0 M1143.5,260.5 1147.7,261.3 M1148.0,261.3 1149.8,254.8 M1148.2,263.3 1147.7,265.5 M1152.6,250.0 1154.9,250.3 M1162.4,253.0 1163.1,261.3 M1158.5,263.3 1163.8,261.3 M1160.3,267.9 1159.9,270.5 1155.0,271.3 1154.2,270.7 1150.7,270.5 M1149.8,275.1 1153.3,274.6 1155.9,273.3 1154.2,271.3 M1155.9,272.6 1161.5,273.3 1161.5,275.3 M1158.5,263.3 1160.3,267.9 1163.8,266.8 1167.3,268.1 1166.4,270.7 1165.5,272.8 1161.5,273.3 M1178.7,252.7 1179.6,258.5 1177.8,262.7 1176.9,266.8 M1163.1,261.3 1167.3,262.7 1170.8,265.5 1176.9,266.8 M1167.3,268.1 1170.8,269.4 1176.9,268.7 M1174.3,246.3 1184.1,247.5 M1180.1,240.5 1185.5,241.8 M1186.6,235.4 1185.7,241.8 1186.9,246.3 M1178.7,252.7 1184.1,247.5 1191.0,247.2 1193.2,258.2 1190.1,259.9 1179.6,258.5 M1171.9,251.5 1177.5,251.8 M1176.9,266.8 1177.5,269.4 1184.0,268.9 1187.5,269.4 1190.1,273.3 M1193.2,258.2 1197.1,258.0 1199.7,262.7 1204.1,264.6 1207.6,265.5 1204.5,271.5 M1176.9,279.5 1186.6,280.0 M1174.3,273.3 1176.9,278.3 M1165.5,272.8 1170.8,275.1 1174.3,273.3 1177.5,269.4 M1170.8,275.1 1171.7,279.5 1171.7,283.2 M1164.7,275.8 1170.8,277.6 M1176.9,279.5 1177.8,285.5 1184.0,285.3 1186.6,284.3 M1171.7,284.8 1174.3,283.6 1177.8,285.5 M1173.4,289.0 1176.9,286.2 1183.1,286.2 M1190.1,231.6 1187.5,228.0 1190.1,222.3 1189.2,205.7 1187.5,196.3 M1179.6,210.9 1173.4,196.3 M1158.5,236.8 1159.4,229.8 1158.5,220.4 1162.9,212.2 1168.2,198.7 1173.4,196.3 M1173.4,196.3 1183.1,191.8 1187.5,196.3 M1219.0,268.1 1222.5,262.7 1228.6,259.9 1234.8,262.5 1244.4,261.3 1245.3,252.7 1253.2,249.7 1260.2,249.1 1266.3,254.2 1271.6,252.7 1275.1,257.1 1282.1,261.3 1287.4,264.6 1290.5,266.5 M1290.5,266.5 1287.4,272.0 1282.1,275.8 1278.6,277.1 1277.7,282.4 M1277.7,282.4 1268.1,282.0 1262.0,283.6 1256.7,286.7 1251.4,280.8 1244.4,278.8 1240.0,275.8 1235.7,277.1 1233.9,286.0 1230.4,284.3 M1233.9,286.0 1240.0,283.2 1244.4,286.7 1247.1,290.1 1254.1,294.8 M1232.0,295.0 1237.4,293.5 1243.5,296.8 1244.8,298.7 M1244.8,298.7 1243.5,303.2 1244.4,307.6 1244.2,310.8 M1244.2,310.8 1249.7,311.4 1254.1,310.6 1259.3,307.4 1261.1,302.4 1262.8,297.9 1268.1,295.7 M1254.1,294.8 1260.2,294.6 1268.1,295.7 1269.0,290.1 1266.3,290.1 1261.1,287.1 1262.0,283.6 M1244.2,310.8 1247.1,314.4 1245.5,319.9 M1221.6,310.4 1220.8,304.3 1217.3,301.1 1216.4,294.6 1215.2,290.3 M1216.0,295.3 1211.8,295.5 1209.4,301.3 1205.9,305.7 M1205.9,305.7 1211.1,308.4 1219.0,312.2 1221.6,312.4 M1211.8,295.5 1204.1,296.1 1201.5,297.4 M1198.9,311.6 1202.4,309.4 1205.9,305.7 M1212.5,336.3 1219.9,335.4 1228.6,331.7 1233.9,325.1 1228.6,322.4 M1207.6,281.0 1214.6,282.7 1219.0,284.6 1222.5,284.8 M1210.2,285.5 1213.8,286.4 1216.0,289.7 M1291.4,266.3 1297.0,274.6 1305.8,282.7 1321.5,285.3 1332.1,280.8 1338.2,277.3 1347.0,272.8 1340.8,264.6 M1291.4,266.3 1298.8,262.7 1309.3,258.5 1316.3,262.7 1325.1,264.1 1337.3,263.6 1340.8,264.6 M1340.8,264.6 1347.0,254.8 1358.4,256.2 1362.7,265.5 1367.1,270.2 1373.3,268.9 1370.6,277.1 1367.1,282.0 1366.6,283.6 M1366.6,283.6 1361.9,284.3 1355.4,289.2 M1358.9,293.9 1362.7,292.4 M1277.7,282.4 1270.7,287.8 1266.5,290.3 1268.6,295.5 1273.3,299.0 1276.9,305.3 1275.6,308.0 1279.5,310.0 M1277.7,312.6 1284.7,315.6 1292.1,317.6 1291.8,314.6 1284.7,313.2 1279.5,310.0 M1291.8,314.6 1298.8,314.8 1307.5,313.8 1310.2,319.4 1308.4,322.2 1311.9,325.9 1315.4,325.1 1317.2,324.5 1323.3,324.5 1326.8,326.8 M1257.0,322.8 1262.0,321.5 1262.0,314.4 1268.1,308.4 1268.1,304.3 1273.3,299.0 M1293.0,326.1 1292.6,319.9 1298.8,320.3 1299.8,326.1 M1299.8,326.1 1302.3,323.2 1304.0,317.4 1307.5,313.8 M1310.2,348.0 1311.0,339.9 1310.2,336.3 1308.9,332.6 1312.8,329.1 M1312.8,329.1 1314.5,334.4 1320.7,334.4 1322.4,339.9 M1317.9,345.1 1318.0,340.3 1322.4,339.9 1325.9,342.6 1323.3,346.4 1320.7,347.3 M1316.6,325.3 1319.8,328.9 1322.4,332.6 1325.1,336.3 1325.9,339.9 M1313.0,354.2 1316.5,354.7 M1329.6,362.3 1333.8,363.0 1338.7,363.0 1340.0,358.6 1344.0,358.2 M1384.6,370.2 1384.6,381.6 M1011.3,330.4 1011.8,333.5" fill="none" stroke="#e5007a" stroke-width="1.15" stroke-linejoin="round"/>
<circle cx="998.8" cy="280.1" r="4.2" fill="#10b010" fill-opacity=".38"/><circle cx="924.7" cy="294.8" r="4.5" fill="#10b010" fill-opacity=".38"/><circle cx="966.8" cy="294.8" r="4.5" fill="#10b010" fill-opacity=".38"/><circle cx="963.9" cy="330.1" r="4.5" fill="#10b010" fill-opacity=".38"/><circle cx="1045.8" cy="399.1" r="5" fill="#10b010" fill-opacity=".38"/><circle cx="1054.1" cy="409.5" r="4.5" fill="#10b010" fill-opacity=".38"/><circle cx="1033.2" cy="372" r="3" fill="#10b010" fill-opacity=".38"/><circle cx="1191.9" cy="264.2" r="5" fill="#10b010" fill-opacity=".38"/><circle cx="1209.2" cy="285.4" r="5" fill="#10b010" fill-opacity=".38"/><circle cx="1339" cy="303.9" r="5" fill="#10b010" fill-opacity=".38"/><circle cx="1276.2" cy="327" r="5" fill="#10b010" fill-opacity=".38"/><circle cx="1337.8" cy="325.8" r="5" fill="#10b010" fill-opacity=".38"/><circle cx="1327" cy="336.6" r="4.5" fill="#10b010" fill-opacity=".38"/><circle cx="1403.1" cy="428.5" r="4.6" fill="#10b010" fill-opacity=".38"/><circle cx="1145" cy="256" r="4" fill="#10b010" fill-opacity=".38"/><path d="M1179.7,248.9 C1185.8,248.5 1200.5,246.9 1216.2,246.6 C1231.9,246.3 1256.6,245.5 1273.9,247.3 C1291.2,249.2 1305.8,251.3 1320.0,257.7 C1334.2,264.0 1349.7,274.6 1359.3,285.4 C1368.9,296.2 1372.4,308.4 1377.8,322.3 C1383.2,336.2 1387.8,353.9 1391.6,368.5 C1395.4,383.1 1398.9,400.0 1400.8,410.0 C1402.7,420.0 1402.7,425.4 1403.1,428.5" fill="none" stroke="#4cb84c" stroke-opacity=".8" stroke-width="1.5"/><path d="M998.8,280.1 C1005.8,276.3 1025.9,263.0 1040.5,257.1 C1055.1,251.2 1074.0,245.8 1086.5,244.6 C1099.0,243.4 1108.0,248.1 1115.7,249.8 C1123.4,251.6 1129.6,254.2 1132.4,255.1" fill="none" stroke="#2fd62f" stroke-width="1.9" stroke-linecap="round"/><path d="M1151.2,258.8 C1151.7,261.0 1154.0,267.6 1154.3,271.8 C1154.6,276.1 1155.2,278.1 1153.3,284.3 C1151.4,290.6 1149.1,299.6 1142.8,309.3 C1136.5,319.0 1126.5,330.5 1115.7,342.7 C1104.9,354.9 1088.4,371.3 1078.1,382.4 C1067.8,393.5 1058.1,405.0 1054.1,409.5" fill="none" stroke="#2fd62f" stroke-width="1.9" stroke-linecap="round"/><path d="M1203.0,368.0 C1207.1,363.1 1217.8,349.9 1227.7,338.5 C1237.6,327.1 1252.7,307.8 1262.3,299.3 C1271.9,290.8 1278.5,288.5 1285.4,287.7 C1292.3,286.9 1298.5,290.0 1303.9,294.6 C1309.3,299.2 1313.9,308.4 1317.7,315.4 C1321.5,322.4 1325.5,333.1 1327.0,336.6" fill="none" stroke="#2fd62f" stroke-width="1.9" stroke-linecap="round"/><circle cx="1132.4" cy="255.1" r="3.1" fill="#22ee22"/><circle cx="1151.2" cy="258.8" r="4.2" fill="#22ee22"/><circle cx="1179.7" cy="248.9" r="2.8" fill="#22ee22"/><circle cx="1179.7" cy="248.9" r="5.5" fill="none" stroke="#55dd55" stroke-opacity=".8" stroke-width="1"/><circle cx="1203" cy="368" r="3.1" fill="#22ee22"/><circle cx="1203" cy="368" r="14" fill="none" stroke="#3cc83c" stroke-opacity=".2" stroke-width="1"/>
</svg>
<div class="a" style="left:1009.2px;top:494px;width:195.7px;height:24.8px;background:#2e2e30;border-radius:3px"></div>
<div class="a" style="left:1013.50px;top:499.74px;font-size:16px;line-height:16px;color:#8a8a8a;font-family:'Liberation Mono',monospace;font-weight:normal;"><span class="sx" style="transform:scaleX(0.83);transform-origin:0 0">www.sicherheitstacho.eu</span></div>
<div class="a" style="left:150.5px;top:543.0px;width:309.1px;height:319.3px;overflow:hidden;border-radius:3px;background:#1d1d1f"><div class="a" style="left:0;top:0;width:302.6px;height:31.0px;background:#3a3a3c"></div><div class="a" style="left:302.6px;top:0;width:5.5px;height:319.3px;background:#2f2f31"></div><div class="a" style="left:4.5px;top:63.5px;width:294.0px;height:27.0px;background:#353537"></div><div class="a" style="left:4.5px;top:62.75px;width:294.0px;height:1.5px;background:#808082"></div><div class="a" style="left:4.5px;top:89.75px;width:294.0px;height:1.5px;background:#808082"></div><div class="a" style="left:4.5px;top:116.75px;width:294.0px;height:1.5px;background:#808082"></div><div class="a" style="left:4.5px;top:143.75px;width:294.0px;height:1.5px;background:#808082"></div><div class="a" style="left:4.5px;top:170.75px;width:294.0px;height:1.5px;background:#808082"></div><div class="a" style="left:4.5px;top:197.75px;width:294.0px;height:1.5px;background:#808082"></div><div class="a" style="left:4.5px;top:224.75px;width:294.0px;height:1.5px;background:#808082"></div><div class="a" style="left:4.5px;top:251.75px;width:294.0px;height:1.5px;background:#808082"></div><div class="a" style="left:4.5px;top:278.75px;width:294.0px;height:1.5px;background:#808082"></div><div class="a" style="left:63.40px;top:11.86px;font-size:14.8px;line-height:14.8px;color:#fff;font-family:'Liberation Mono',monospace;font-weight:bold;"><span class="sx" style="transform:scaleX(0.79);transform-origin:0 0">Alert Distribution (60s)</span></div><div class="a" style="left:41.90px;top:41.61px;font-size:13.3px;line-height:13.3px;color:#fff;font-family:'Liberation Mono',monospace;font-weight:bold;transform:translateX(-50%);"><span class="sx" style="transform:scaleX(0.78);transform-origin:50% 0">Color</span></div><div class="a" style="left:146.40px;top:41.61px;font-size:13.3px;line-height:13.3px;color:#fff;font-family:'Liberation Mono',monospace;font-weight:bold;transform:translateX(-50%);"><span class="sx" style="transform:scaleX(0.78);transform-origin:50% 0">Category</span></div><div class="a" style="left:255.80px;top:41.61px;font-size:13.3px;line-height:13.3px;color:#fff;font-family:'Liberation Mono',monospace;font-weight:bold;transform:translateX(-50%);"><span class="sx" style="transform:scaleX(0.78);transform-origin:50% 0">Count</span></div><div class="a" style="left:36.3px;top:70.8px;width:12.4px;height:12.4px;border-radius:50%;background:#00e61a"></div><div class="a" style="left:87.90px;top:71.82px;font-size:12.9px;line-height:12.9px;color:#fff;font-family:'Liberation Mono',monospace;font-weight:normal;-webkit-text-stroke:.25px #fff;"><span class="sx" style="transform:scaleX(0.78);transform-origin:0 0">Network</span></div><div class="a" style="right:18.60px;top:71.82px;font-size:12.9px;line-height:12.9px;color:#fff;font-family:'Liberation Mono',monospace;font-weight:normal;-webkit-text-stroke:.25px #fff;"><span class="sx" style="transform:scaleX(0.78);transform-origin:100% 0">23,772</span></div><div class="a" style="left:36.3px;top:97.8px;width:12.4px;height:12.4px;border-radius:50%;background:#1db220"></div><div class="a" style="left:87.90px;top:98.82px;font-size:12.9px;line-height:12.9px;color:#fff;font-family:'Liberation Mono',monospace;font-weight:normal;-webkit-text-stroke:.25px #fff;"><span class="sx" style="transform:scaleX(0.78);transform-origin:0 0">Passwords</span></div><div class="a" style="right:18.60px;top:98.82px;font-size:12.9px;line-height:12.9px;color:#fff;font-family:'Liberation Mono',monospace;font-weight:normal;-webkit-text-stroke:.25px #fff;"><span class="sx" style="transform:scaleX(0.78);transform-origin:100% 0">3,055</span></div><div class="a" style="left:36.3px;top:124.8px;width:12.4px;height:12.4px;border-radius:50%;background:#2ee84c"></div><div class="a" style="left:87.90px;top:125.82px;font-size:12.9px;line-height:12.9px;color:#fff;font-family:'Liberation Mono',monospace;font-weight:normal;-webkit-text-stroke:.25px #fff;"><span class="sx" style="transform:scaleX(0.78);transform-origin:0 0">SSH/console</span></div><div class="a" style="right:18.60px;top:125.82px;font-size:12.9px;line-height:12.9px;color:#fff;font-family:'Liberation Mono',monospace;font-weight:normal;-webkit-text-stroke:.25px #fff;"><span class="sx" style="transform:scaleX(0.78);transform-origin:100% 0">2,439</span></div><div class="a" style="left:36.3px;top:151.8px;width:12.4px;height:12.4px;border-radius:50%;background:#6b3f00"></div><div class="a" style="left:87.90px;top:152.82px;font-size:12.9px;line-height:12.9px;color:#fff;font-family:'Liberation Mono',monospace;font-weight:normal;-webkit-text-stroke:.25px #fff;"><span class="sx" style="transform:scaleX(0.78);transform-origin:0 0">RDP</span></div><div class="a" style="right:18.60px;top:152.82px;font-size:12.9px;line-height:12.9px;color:#fff;font-family:'Liberation Mono',monospace;font-weight:normal;-webkit-text-stroke:.25px #fff;"><span class="sx" style="transform:scaleX(0.78);transform-origin:100% 0">1,756</span></div><div class="a" style="left:36.3px;top:178.8px;width:12.4px;height:12.4px;border-radius:50%;background:#9e6a8c"></div><div class="a" style="left:87.90px;top:179.82px;font-size:12.9px;line-height:12.9px;color:#fff;font-family:'Liberation Mono',monospace;font-weight:normal;-webkit-text-stroke:.25px #fff;"><span class="sx" style="transform:scaleX(0.78);transform-origin:0 0">Service</span></div><div class="a" style="right:18.60px;top:179.82px;font-size:12.9px;line-height:12.9px;color:#fff;font-family:'Liberation Mono',monospace;font-weight:normal;-webkit-text-stroke:.25px #fff;"><span class="sx" style="transform:scaleX(0.78);transform-origin:100% 0">531</span></div><div class="a" style="left:36.3px;top:205.8px;width:12.4px;height:12.4px;border-radius:50%;background:#c8ee22"></div><div class="a" style="left:87.90px;top:206.82px;font-size:12.9px;line-height:12.9px;color:#fff;font-family:'Liberation Mono',monospace;font-weight:normal;-webkit-text-stroke:.25px #fff;"><span class="sx" style="transform:scaleX(0.78);transform-origin:0 0">Webpage</span></div><div class="a" style="right:18.60px;top:206.82px;font-size:12.9px;line-height:12.9px;color:#fff;font-family:'Liberation Mono',monospace;font-weight:normal;-webkit-text-stroke:.25px #fff;"><span class="sx" style="transform:scaleX(0.78);transform-origin:100% 0">387</span></div><div class="a" style="left:36.3px;top:232.8px;width:12.4px;height:12.4px;border-radius:50%;background:#4ef25a"></div><div class="a" style="left:87.90px;top:233.82px;font-size:12.9px;line-height:12.9px;color:#fff;font-family:'Liberation Mono',monospace;font-weight:normal;-webkit-text-stroke:.25px #fff;"><span class="sx" style="transform:scaleX(0.78);transform-origin:0 0">E-Mail</span></div><div class="a" style="right:18.60px;top:233.82px;font-size:12.9px;line-height:12.9px;color:#fff;font-family:'Liberation Mono',monospace;font-weight:normal;-webkit-text-stroke:.25px #fff;"><span class="sx" style="transform:scaleX(0.78);transform-origin:100% 0">173</span></div><div class="a" style="left:36.3px;top:259.8px;width:12.4px;height:12.4px;border-radius:50%;background:#90e05c"></div><div class="a" style="left:87.90px;top:260.82px;font-size:12.9px;line-height:12.9px;color:#fff;font-family:'Liberation Mono',monospace;font-weight:normal;-webkit-text-stroke:.25px #fff;"><span class="sx" style="transform:scaleX(0.78);transform-origin:0 0">Industrial</span></div><div class="a" style="right:18.60px;top:260.82px;font-size:12.9px;line-height:12.9px;color:#fff;font-family:'Liberation Mono',monospace;font-weight:normal;-webkit-text-stroke:.25px #fff;"><span class="sx" style="transform:scaleX(0.78);transform-origin:100% 0">70</span></div><div class="a" style="left:36.3px;top:286.8px;width:12.4px;height:12.4px;border-radius:50%;background:#d06078"></div><div class="a" style="left:87.90px;top:287.82px;font-size:12.9px;line-height:12.9px;color:#fff;font-family:'Liberation Mono',monospace;font-weight:normal;-webkit-text-stroke:.25px #fff;"><span class="sx" style="transform:scaleX(0.78);transform-origin:0 0">Printer</span></div><div class="a" style="right:18.60px;top:287.82px;font-size:12.9px;line-height:12.9px;color:#fff;font-family:'Liberation Mono',monospace;font-weight:normal;-webkit-text-stroke:.25px #fff;"><span class="sx" style="transform:scaleX(0.78);transform-origin:100% 0">26</span></div></div><div class="a" style="left:150.0px;top:542.5px;width:310.1px;height:320.3px;border:1.5px solid #6c6c6e;border-radius:3px"></div>
<div class="a" style="left:464.5px;top:543.0px;width:212.0px;height:319.3px;overflow:hidden;border-radius:3px;background:#1d1d1f"><div class="a" style="left:0;top:0;width:205.5px;height:31.0px;background:#3a3a3c"></div><div class="a" style="left:205.5px;top:0;width:5.5px;height:319.3px;background:#2f2f31"></div><div class="a" style="left:205.5px;top:0;width:5.5px;height:297.3px;background:#4a4a4c;border-radius:0 0 3px 3px"></div><div class="a" style="left:4.5px;top:62.75px;width:197.2px;height:1.5px;background:#808082"></div><div class="a" style="left:4.5px;top:89.75px;width:197.2px;height:1.5px;background:#808082"></div><div class="a" style="left:4.5px;top:116.75px;width:197.2px;height:1.5px;background:#808082"></div><div class="a" style="left:4.5px;top:143.75px;width:197.2px;height:1.5px;background:#808082"></div><div class="a" style="left:4.5px;top:170.75px;width:197.2px;height:1.5px;background:#808082"></div><div class="a" style="left:4.5px;top:197.75px;width:197.2px;height:1.5px;background:#808082"></div><div class="a" style="left:4.5px;top:224.75px;width:197.2px;height:1.5px;background:#808082"></div><div class="a" style="left:4.5px;top:251.75px;width:197.2px;height:1.5px;background:#808082"></div><div class="a" style="left:4.5px;top:278.75px;width:197.2px;height:1.5px;background:#808082"></div><div class="a" style="left:4.5px;top:305.75px;width:197.2px;height:1.5px;background:#808082"></div><div class="a" style="left:22.20px;top:11.86px;font-size:14.8px;line-height:14.8px;color:#fff;font-family:'Liberation Mono',monospace;font-weight:bold;"><span class="sx" style="transform:scaleX(0.79);transform-origin:0 0">Source Countries (30d)</span></div><div class="a" style="left:45.20px;top:41.61px;font-size:13.3px;line-height:13.3px;color:#fff;font-family:'Liberation Mono',monospace;font-weight:bold;transform:translateX(-50%);"><span class="sx" style="transform:scaleX(0.78);transform-origin:50% 0">Country</span></div><div class="a" style="left:143.70px;top:41.61px;font-size:13.3px;line-height:13.3px;color:#fff;font-family:'Liberation Mono',monospace;font-weight:bold;transform:translateX(-50%);"><span class="sx" style="transform:scaleX(0.78);transform-origin:50% 0">Count</span></div><svg class="a" style="left:27.7px;top:70.8px" width="16" height="12" viewBox="0 0 16 12"><rect width="16" height="12" fill="#fff"/><rect y="0.00" width="16" height="0.92" fill="#c8313e"/><rect y="1.85" width="16" height="0.92" fill="#c8313e"/><rect y="3.69" width="16" height="0.92" fill="#c8313e"/><rect y="5.54" width="16" height="0.92" fill="#c8313e"/><rect y="7.38" width="16" height="0.92" fill="#c8313e"/><rect y="9.23" width="16" height="0.92" fill="#c8313e"/><rect y="11.08" width="16" height="0.92" fill="#c8313e"/><rect width="7" height="6.5" fill="#3b3b6d"/><path d="M1,1.2h5M1,2.7h5M1,4.2h5M1,5.5h5" stroke="#9a9ac0" stroke-width=".5"/></svg><div class="a" style="left:51.20px;top:71.82px;font-size:12.9px;line-height:12.9px;color:#fff;font-family:'Liberation Mono',monospace;font-weight:normal;-webkit-text-stroke:.25px #fff;"><span class="sx" style="transform:scaleX(0.78);transform-origin:0 0">US</span></div><div class="a" style="right:18.30px;top:71.82px;font-size:12.9px;line-height:12.9px;color:#fff;font-family:'Liberation Mono',monospace;font-weight:normal;-webkit-text-stroke:.25px #fff;"><span class="sx" style="transform:scaleX(0.78);transform-origin:100% 0">665,295,346</span></div><svg class="a" style="left:27.7px;top:97.8px" width="16" height="12" viewBox="0 0 16 12"><rect width="5.34" height="12" fill="#002b7f"/><rect x="5.33" width="5.34" height="12" fill="#fcd116"/><rect x="10.66" width="5.34" height="12" fill="#ce1126"/></svg><div class="a" style="left:51.20px;top:98.82px;font-size:12.9px;line-height:12.9px;color:#fff;font-family:'Liberation Mono',monospace;font-weight:normal;-webkit-text-stroke:.25px #fff;"><span class="sx" style="transform:scaleX(0.78);transform-origin:0 0">RO</span></div><div class="a" style="right:18.30px;top:98.82px;font-size:12.9px;line-height:12.9px;color:#fff;font-family:'Liberation Mono',monospace;font-weight:normal;-webkit-text-stroke:.25px #fff;"><span class="sx" style="transform:scaleX(0.78);transform-origin:100% 0">279,307,502</span></div><svg class="a" style="left:27.7px;top:124.8px" width="16" height="12" viewBox="0 0 16 12"><rect width="16" height="12" fill="#229e45"/><polygon points="8,1.5 14.5,6 8,10.5 1.5,6" fill="#f8e509"/><circle cx="8" cy="6" r="2.7" fill="#2b49a3"/><path d="M5.5,5.5q2.5,-.6 5,.8" stroke="#fff" stroke-width=".5" fill="none"/></svg><div class="a" style="left:51.20px;top:125.82px;font-size:12.9px;line-height:12.9px;color:#fff;font-family:'Liberation Mono',monospace;font-weight:normal;-webkit-text-stroke:.25px #fff;"><span class="sx" style="transform:scaleX(0.78);transform-origin:0 0">BR</span></div><div class="a" style="right:18.30px;top:125.82px;font-size:12.9px;line-height:12.9px;color:#fff;font-family:'Liberation Mono',monospace;font-weight:normal;-webkit-text-stroke:.25px #fff;"><span class="sx" style="transform:scaleX(0.78);transform-origin:100% 0">177,594,452</span></div><svg class="a" style="left:27.7px;top:151.8px" width="16" height="12" viewBox="0 0 16 12"><rect width="16" height="4" fill="#ae1c28"/><rect y="4" width="16" height="4" fill="#fff"/><rect y="8" width="16" height="4" fill="#21468b"/></svg><div class="a" style="left:51.20px;top:152.82px;font-size:12.9px;line-height:12.9px;color:#fff;font-family:'Liberation Mono',monospace;font-weight:normal;-webkit-text-stroke:.25px #fff;"><span class="sx" style="transform:scaleX(0.78);transform-origin:0 0">NL</span></div><div class="a" style="right:18.30px;top:152.82px;font-size:12.9px;line-height:12.9px;color:#fff;font-family:'Liberation Mono',monospace;font-weight:normal;-webkit-text-stroke:.25px #fff;"><span class="sx" style="transform:scaleX(0.78);transform-origin:100% 0">86,922,625</span></div><svg class="a" style="left:27.7px;top:178.8px" width="16" height="12" viewBox="0 0 16 12"><rect width="16" height="4" fill="#000"/><rect y="4" width="16" height="4" fill="#dd0000"/><rect y="8" width="16" height="4" fill="#ffce00"/></svg><div class="a" style="left:51.20px;top:179.82px;font-size:12.9px;line-height:12.9px;color:#fff;font-family:'Liberation Mono',monospace;font-weight:normal;-webkit-text-stroke:.25px #fff;"><span class="sx" style="transform:scaleX(0.78);transform-origin:0 0">DE</span></div><div class="a" style="right:18.30px;top:179.82px;font-size:12.9px;line-height:12.9px;color:#fff;font-family:'Liberation Mono',monospace;font-weight:normal;-webkit-text-stroke:.25px #fff;"><span class="sx" style="transform:scaleX(0.78);transform-origin:100% 0">83,347,191</span></div><svg class="a" style="left:27.7px;top:205.8px" width="16" height="12" viewBox="0 0 16 12"><rect width="5.34" height="12" fill="#002395"/><rect x="5.33" width="5.34" height="12" fill="#fff"/><rect x="10.66" width="5.34" height="12" fill="#ed2939"/></svg><div class="a" style="left:51.20px;top:206.82px;font-size:12.9px;line-height:12.9px;color:#fff;font-family:'Liberation Mono',monospace;font-weight:normal;-webkit-text-stroke:.25px #fff;"><span class="sx" style="transform:scaleX(0.78);transform-origin:0 0">FR</span></div><div class="a" style="right:18.30px;top:206.82px;font-size:12.9px;line-height:12.9px;color:#fff;font-family:'Liberation Mono',monospace;font-weight:normal;-webkit-text-stroke:.25px #fff;"><span class="sx" style="transform:scaleX(0.78);transform-origin:100% 0">72,338,286</span></div><svg class="a" style="left:27.7px;top:232.8px" width="16" height="12" viewBox="0 0 16 12"><rect width="16" height="12" fill="#ee1c25"/><polygon points="3.00,1.20 3.42,2.42 4.71,2.44 3.68,3.22 4.06,4.46 3.00,3.72 1.94,4.46 2.32,3.22 1.29,2.44 2.58,2.42" fill="#ffff00"/><polygon points="5.80,0.90 5.94,1.31 6.37,1.31 6.03,1.57 6.15,1.99 5.80,1.74 5.45,1.99 5.57,1.57 5.23,1.31 5.66,1.31" fill="#ff0"/><polygon points="6.80,2.20 6.94,2.61 7.37,2.61 7.03,2.87 7.15,3.29 6.80,3.04 6.45,3.29 6.57,2.87 6.23,2.61 6.66,2.61" fill="#ff0"/><polygon points="6.80,3.80 6.94,4.21 7.37,4.21 7.03,4.47 7.15,4.89 6.80,4.64 6.45,4.89 6.57,4.47 6.23,4.21 6.66,4.21" fill="#ff0"/><polygon points="5.80,5.00 5.94,5.41 6.37,5.41 6.03,5.67 6.15,6.09 5.80,5.84 5.45,6.09 5.57,5.67 5.23,5.41 5.66,5.41" fill="#ff0"/></svg><div class="a" style="left:51.20px;top:233.82px;font-size:12.9px;line-height:12.9px;color:#fff;font-family:'Liberation Mono',monospace;font-weight:normal;-webkit-text-stroke:.25px #fff;"><span class="sx" style="transform:scaleX(0.78);transform-origin:0 0">CN</span></div><div class="a" style="right:18.30px;top:233.82px;font-size:12.9px;line-height:12.9px;color:#fff;font-family:'Liberation Mono',monospace;font-weight:normal;-webkit-text-stroke:.25px #fff;"><span class="sx" style="transform:scaleX(0.78);transform-origin:100% 0">64,393,004</span></div><svg class="a" style="left:27.7px;top:259.8px" width="16" height="12" viewBox="0 0 16 12"><rect width="16" height="4" fill="#fff"/><rect y="4" width="16" height="4" fill="#0039a6"/><rect y="8" width="16" height="4" fill="#d52b1e"/></svg><div class="a" style="left:51.20px;top:260.82px;font-size:12.9px;line-height:12.9px;color:#fff;font-family:'Liberation Mono',monospace;font-weight:normal;-webkit-text-stroke:.25px #fff;"><span class="sx" style="transform:scaleX(0.78);transform-origin:0 0">RU</span></div><div class="a" style="right:18.30px;top:260.82px;font-size:12.9px;line-height:12.9px;color:#fff;font-family:'Liberation Mono',monospace;font-weight:normal;-webkit-text-stroke:.25px #fff;"><span class="sx" style="transform:scaleX(0.78);transform-origin:100% 0">63,481,132</span></div><svg class="a" style="left:27.7px;top:286.8px" width="16" height="12" viewBox="0 0 16 12"><rect width="16" height="4" fill="#ff9933"/><rect y="4" width="16" height="4" fill="#fff"/><rect y="8" width="16" height="4" fill="#138808"/><circle cx="8" cy="6" r="1.5" fill="#000080"/></svg><div class="a" style="left:51.20px;top:287.82px;font-size:12.9px;line-height:12.9px;color:#fff;font-family:'Liberation Mono',monospace;font-weight:normal;-webkit-text-stroke:.25px #fff;"><span class="sx" style="transform:scaleX(0.78);transform-origin:0 0">IN</span></div><div class="a" style="right:18.30px;top:287.82px;font-size:12.9px;line-height:12.9px;color:#fff;font-family:'Liberation Mono',monospace;font-weight:normal;-webkit-text-stroke:.25px #fff;"><span class="sx" style="transform:scaleX(0.78);transform-origin:100% 0">61,512,080</span></div><svg class="a" style="left:27.7px;top:313.8px" width="16" height="12" viewBox="0 0 16 12"><rect width="16" height="6" fill="#0057b7"/><rect y="6" width="16" height="6" fill="#ffd700"/></svg><div class="a" style="left:51.20px;top:314.82px;font-size:12.9px;line-height:12.9px;color:#fff;font-family:'Liberation Mono',monospace;font-weight:normal;-webkit-text-stroke:.25px #fff;"><span class="sx" style="transform:scaleX(0.78);transform-origin:0 0">UA</span></div><div class="a" style="right:18.30px;top:314.82px;font-size:12.9px;line-height:12.9px;color:#fff;font-family:'Liberation Mono',monospace;font-weight:normal;-webkit-text-stroke:.25px #fff;"><span class="sx" style="transform:scaleX(0.78);transform-origin:100% 0">55,535,083</span></div></div><div class="a" style="left:464.0px;top:542.5px;width:213.0px;height:320.3px;border:1.5px solid #6c6c6e;border-radius:3px"></div>
<div class="a" style="left:681.5px;top:543.0px;width:212.0px;height:319.3px;overflow:hidden;border-radius:3px;background:#1d1d1f"><div class="a" style="left:0;top:0;width:205.5px;height:31.0px;background:#3a3a3c"></div><div class="a" style="left:205.5px;top:0;width:5.5px;height:319.3px;background:#2f2f31"></div><div class="a" style="left:205.5px;top:0;width:5.5px;height:297.3px;background:#4a4a4c;border-radius:0 0 3px 3px"></div><div class="a" style="left:4.5px;top:90.5px;width:197.2px;height:27.0px;background:#353537"></div><div class="a" style="left:4.5px;top:62.75px;width:197.2px;height:1.5px;background:#808082"></div><div class="a" style="left:4.5px;top:89.75px;width:197.2px;height:1.5px;background:#808082"></div><div class="a" style="left:4.5px;top:116.75px;width:197.2px;height:1.5px;background:#808082"></div><div class="a" style="left:4.5px;top:143.75px;width:197.2px;height:1.5px;background:#808082"></div><div class="a" style="left:4.5px;top:170.75px;width:197.2px;height:1.5px;background:#808082"></div><div class="a" style="left:4.5px;top:197.75px;width:197.2px;height:1.5px;background:#808082"></div><div class="a" style="left:4.5px;top:224.75px;width:197.2px;height:1.5px;background:#808082"></div><div class="a" style="left:4.5px;top:251.75px;width:197.2px;height:1.5px;background:#808082"></div><div class="a" style="left:4.5px;top:278.75px;width:197.2px;height:1.5px;background:#808082"></div><div class="a" style="left:4.5px;top:305.75px;width:197.2px;height:1.5px;background:#808082"></div><div class="a" style="left:22.20px;top:11.86px;font-size:14.8px;line-height:14.8px;color:#fff;font-family:'Liberation Mono',monospace;font-weight:bold;"><span class="sx" style="transform:scaleX(0.79);transform-origin:0 0">Target Countries (30d)</span></div><div class="a" style="left:45.20px;top:41.61px;font-size:13.3px;line-height:13.3px;color:#fff;font-family:'Liberation Mono',monospace;font-weight:bold;transform:translateX(-50%);"><span class="sx" style="transform:scaleX(0.78);transform-origin:50% 0">Country</span></div><div class="a" style="left:143.70px;top:41.61px;font-size:13.3px;line-height:13.3px;color:#fff;font-family:'Liberation Mono',monospace;font-weight:bold;transform:translateX(-50%);"><span class="sx" style="transform:scaleX(0.78);transform-origin:50% 0">Count</span></div><svg class="a" style="left:27.7px;top:70.8px" width="16" height="12" viewBox="0 0 16 12"><rect width="16" height="12" fill="#fff"/><rect y="0.00" width="16" height="0.92" fill="#c8313e"/><rect y="1.85" width="16" height="0.92" fill="#c8313e"/><rect y="3.69" width="16" height="0.92" fill="#c8313e"/><rect y="5.54" width="16" height="0.92" fill="#c8313e"/><rect y="7.38" width="16" height="0.92" fill="#c8313e"/><rect y="9.23" width="16" height="0.92" fill="#c8313e"/><rect y="11.08" width="16" height="0.92" fill="#c8313e"/><rect width="7" height="6.5" fill="#3b3b6d"/><path d="M1,1.2h5M1,2.7h5M1,4.2h5M1,5.5h5" stroke="#9a9ac0" stroke-width=".5"/></svg><div class="a" style="left:51.20px;top:71.82px;font-size:12.9px;line-height:12.9px;color:#fff;font-family:'Liberation Mono',monospace;font-weight:normal;-webkit-text-stroke:.25px #fff;"><span class="sx" style="transform:scaleX(0.78);transform-origin:0 0">US</span></div><div class="a" style="right:18.30px;top:71.82px;font-size:12.9px;line-height:12.9px;color:#fff;font-family:'Liberation Mono',monospace;font-weight:normal;-webkit-text-stroke:.25px #fff;"><span class="sx" style="transform:scaleX(0.78);transform-origin:100% 0">545,785,336</span></div><svg class="a" style="left:27.7px;top:97.8px" width="16" height="12" viewBox="0 0 16 12"><rect width="16" height="4" fill="#000"/><rect y="4" width="16" height="4" fill="#dd0000"/><rect y="8" width="16" height="4" fill="#ffce00"/></svg><div class="a" style="left:51.20px;top:98.82px;font-size:12.9px;line-height:12.9px;color:#fff;font-family:'Liberation Mono',monospace;font-weight:normal;-webkit-text-stroke:.25px #fff;"><span class="sx" style="transform:scaleX(0.78);transform-origin:0 0">DE</span></div><div class="a" style="right:18.30px;top:98.82px;font-size:12.9px;line-height:12.9px;color:#fff;font-family:'Liberation Mono',monospace;font-weight:normal;-webkit-text-stroke:.25px #fff;"><span class="sx" style="transform:scaleX(0.78);transform-origin:100% 0">432,342,997</span></div><svg class="a" style="left:27.7px;top:124.8px" width="16" height="12" viewBox="0 0 16 12"><rect width="5.34" height="12" fill="#002395"/><rect x="5.33" width="5.34" height="12" fill="#fff"/><rect x="10.66" width="5.34" height="12" fill="#ed2939"/></svg><div class="a" style="left:51.20px;top:125.82px;font-size:12.9px;line-height:12.9px;color:#fff;font-family:'Liberation Mono',monospace;font-weight:normal;-webkit-text-stroke:.25px #fff;"><span class="sx" style="transform:scaleX(0.78);transform-origin:0 0">FR</span></div><div class="a" style="right:18.30px;top:125.82px;font-size:12.9px;line-height:12.9px;color:#fff;font-family:'Liberation Mono',monospace;font-weight:normal;-webkit-text-stroke:.25px #fff;"><span class="sx" style="transform:scaleX(0.78);transform-origin:100% 0">142,266,956</span></div><svg class="a" style="left:27.7px;top:151.8px" width="16" height="12" viewBox="0 0 16 12"><rect width="16" height="12" fill="#fff"/><circle cx="8" cy="6" r="3" fill="#bc002d"/></svg><div class="a" style="left:51.20px;top:152.82px;font-size:12.9px;line-height:12.9px;color:#fff;font-family:'Liberation Mono',monospace;font-weight:normal;-webkit-text-stroke:.25px #fff;"><span class="sx" style="transform:scaleX(0.78);transform-origin:0 0">JP</span></div><div class="a" style="right:18.30px;top:152.82px;font-size:12.9px;line-height:12.9px;color:#fff;font-family:'Liberation Mono',monospace;font-weight:normal;-webkit-text-stroke:.25px #fff;"><span class="sx" style="transform:scaleX(0.78);transform-origin:100% 0">104,038,135</span></div><svg class="a" style="left:27.7px;top:178.8px" width="16" height="12" viewBox="0 0 16 12"><rect width="16" height="12" fill="#012169"/><path d="M0,0L16,12M16,0L0,12" stroke="#fff" stroke-width="2.4"/><path d="M0,0L16,12M16,0L0,12" stroke="#c8102e" stroke-width=".8"/><path d="M8,0V12M0,6H16" stroke="#fff" stroke-width="3.6"/><path d="M8,0V12M0,6H16" stroke="#c8102e" stroke-width="2"/></svg><div class="a" style="left:51.20px;top:179.82px;font-size:12.9px;line-height:12.9px;color:#fff;font-family:'Liberation Mono',monospace;font-weight:normal;-webkit-text-stroke:.25px #fff;"><span class="sx" style="transform:scaleX(0.78);transform-origin:0 0">GB</span></div><div class="a" style="right:18.30px;top:179.82px;font-size:12.9px;line-height:12.9px;color:#fff;font-family:'Liberation Mono',monospace;font-weight:normal;-webkit-text-stroke:.25px #fff;"><span class="sx" style="transform:scaleX(0.78);transform-origin:100% 0">64,339,005</span></div><svg class="a" style="left:27.7px;top:205.8px" width="16" height="12" viewBox="0 0 16 12"><rect width="16" height="6" fill="#e70011"/><rect y="6" width="16" height="6" fill="#fff"/></svg><div class="a" style="left:51.20px;top:206.82px;font-size:12.9px;line-height:12.9px;color:#fff;font-family:'Liberation Mono',monospace;font-weight:normal;-webkit-text-stroke:.25px #fff;"><span class="sx" style="transform:scaleX(0.78);transform-origin:0 0">ID</span></div><div class="a" style="right:18.30px;top:206.82px;font-size:12.9px;line-height:12.9px;color:#fff;font-family:'Liberation Mono',monospace;font-weight:normal;-webkit-text-stroke:.25px #fff;"><span class="sx" style="transform:scaleX(0.78);transform-origin:100% 0">51,786,279</span></div><svg class="a" style="left:27.7px;top:232.8px" width="16" height="12" viewBox="0 0 16 12"><rect width="16" height="12" fill="#aa151b"/><rect y="3" width="16" height="6" fill="#f1bf00"/><rect x="3.5" y="4.5" width="3" height="3" fill="#ad1519" opacity=".7"/></svg><div class="a" style="left:51.20px;top:233.82px;font-size:12.9px;line-height:12.9px;color:#fff;font-family:'Liberation Mono',monospace;font-weight:normal;-webkit-text-stroke:.25px #fff;"><span class="sx" style="transform:scaleX(0.78);transform-origin:0 0">ES</span></div><div class="a" style="right:18.30px;top:233.82px;font-size:12.9px;line-height:12.9px;color:#fff;font-family:'Liberation Mono',monospace;font-weight:normal;-webkit-text-stroke:.25px #fff;"><span class="sx" style="transform:scaleX(0.78);transform-origin:100% 0">50,140,570</span></div><svg class="a" style="left:27.7px;top:259.8px" width="16" height="12" viewBox="0 0 16 12"><rect width="16" height="4" fill="#ff9933"/><rect y="4" width="16" height="4" fill="#fff"/><rect y="8" width="16" height="4" fill="#138808"/><circle cx="8" cy="6" r="1.5" fill="#000080"/></svg><div class="a" style="left:51.20px;top:260.82px;font-size:12.9px;line-height:12.9px;color:#fff;font-family:'Liberation Mono',monospace;font-weight:normal;-webkit-text-stroke:.25px #fff;"><span class="sx" style="transform:scaleX(0.78);transform-origin:0 0">IN</span></div><div class="a" style="right:18.30px;top:260.82px;font-size:12.9px;line-height:12.9px;color:#fff;font-family:'Liberation Mono',monospace;font-weight:normal;-webkit-text-stroke:.25px #fff;"><span class="sx" style="transform:scaleX(0.78);transform-origin:100% 0">49,081,499</span></div><svg class="a" style="left:27.7px;top:286.8px" width="16" height="12" viewBox="0 0 16 12"><rect width="16" height="12" fill="#229e45"/><polygon points="8,1.5 14.5,6 8,10.5 1.5,6" fill="#f8e509"/><circle cx="8" cy="6" r="2.7" fill="#2b49a3"/><path d="M5.5,5.5q2.5,-.6 5,.8" stroke="#fff" stroke-width=".5" fill="none"/></svg><div class="a" style="left:51.20px;top:287.82px;font-size:12.9px;line-height:12.9px;color:#fff;font-family:'Liberation Mono',monospace;font-weight:normal;-webkit-text-stroke:.25px #fff;"><span class="sx" style="transform:scaleX(0.78);transform-origin:0 0">BR</span></div><div class="a" style="right:18.30px;top:287.82px;font-size:12.9px;line-height:12.9px;color:#fff;font-family:'Liberation Mono',monospace;font-weight:normal;-webkit-text-stroke:.25px #fff;"><span class="sx" style="transform:scaleX(0.78);transform-origin:100% 0">44,255,765</span></div><svg class="a" style="left:27.7px;top:313.8px" width="16" height="12" viewBox="0 0 16 12"><rect width="16" height="4" fill="#ae1c28"/><rect y="4" width="16" height="4" fill="#fff"/><rect y="8" width="16" height="4" fill="#21468b"/></svg><div class="a" style="left:51.20px;top:314.82px;font-size:12.9px;line-height:12.9px;color:#fff;font-family:'Liberation Mono',monospace;font-weight:normal;-webkit-text-stroke:.25px #fff;"><span class="sx" style="transform:scaleX(0.78);transform-origin:0 0">NL</span></div><div class="a" style="right:18.30px;top:314.82px;font-size:12.9px;line-height:12.9px;color:#fff;font-family:'Liberation Mono',monospace;font-weight:normal;-webkit-text-stroke:.25px #fff;"><span class="sx" style="transform:scaleX(0.78);transform-origin:100% 0">42,899,943</span></div></div><div class="a" style="left:681.0px;top:542.5px;width:213.0px;height:320.3px;border:1.5px solid #6c6c6e;border-radius:3px"></div>
<div class="a" style="left:898.5px;top:543.0px;width:851.0px;height:319.3px;overflow:hidden;border-radius:3px;background:#1d1d1f"><div class="a" style="left:0;top:0;width:851.0px;height:31.0px;background:#3a3a3c"></div><div class="a" style="left:4.5px;top:63.5px;width:842.0px;height:27.0px;background:#353537"></div><div class="a" style="left:4.5px;top:62.75px;width:842.0px;height:1.5px;background:#808082"></div><div class="a" style="left:4.5px;top:89.75px;width:842.0px;height:1.5px;background:#808082"></div><div class="a" style="left:4.5px;top:116.75px;width:842.0px;height:1.5px;background:#808082"></div><div class="a" style="left:4.5px;top:143.75px;width:842.0px;height:1.5px;background:#808082"></div><div class="a" style="left:4.5px;top:170.75px;width:842.0px;height:1.5px;background:#808082"></div><div class="a" style="left:4.5px;top:197.75px;width:842.0px;height:1.5px;background:#808082"></div><div class="a" style="left:4.5px;top:224.75px;width:842.0px;height:1.5px;background:#808082"></div><div class="a" style="left:4.5px;top:251.75px;width:842.0px;height:1.5px;background:#808082"></div><div class="a" style="left:4.5px;top:278.75px;width:842.0px;height:1.5px;background:#808082"></div><div class="a" style="left:4.5px;top:305.75px;width:842.0px;height:1.5px;background:#808082"></div><div class="a" style="left:332.80px;top:11.86px;font-size:14.8px;line-height:14.8px;color:#fff;font-family:'Liberation Mono',monospace;font-weight:bold;"><span class="sx" style="transform:scaleX(0.79);transform-origin:0 0">Alert Feed (35 Samples)</span></div><div class="a" style="left:25.40px;top:41.61px;font-size:13.3px;line-height:13.3px;color:#fff;font-family:'Liberation Mono',monospace;font-weight:bold;"><span class="sx" style="transform:scaleX(0.78);transform-origin:0 0">Source</span></div><div class="a" style="left:103.40px;top:41.61px;font-size:13.3px;line-height:13.3px;color:#fff;font-family:'Liberation Mono',monospace;font-weight:bold;"><span class="sx" style="transform:scaleX(0.78);transform-origin:0 0">Target</span></div><div class="a" style="left:235.50px;top:41.61px;font-size:13.3px;line-height:13.3px;color:#fff;font-family:'Liberation Mono',monospace;font-weight:bold;transform:translateX(-50%);"><span class="sx" style="transform:scaleX(0.78);transform-origin:50% 0">Category</span></div><div class="a" style="left:319.00px;top:41.61px;font-size:13.3px;line-height:13.3px;color:#fff;font-family:'Liberation Mono',monospace;font-weight:bold;"><span class="sx" style="transform:scaleX(0.78);transform-origin:0 0">Metadata</span></div><div class="a" style="left:814.60px;top:41.61px;font-size:13.3px;line-height:13.3px;color:#fff;font-family:'Liberation Mono',monospace;font-weight:bold;transform:translateX(-50%);"><span class="sx" style="transform:scaleX(0.78);transform-origin:50% 0">Time</span></div><svg class="a" style="left:25.4px;top:70.8px" width="16" height="12" viewBox="0 0 16 12"><rect width="16" height="12" fill="#fff"/><rect width="4" height="12" fill="#d52b1e"/><rect x="12" width="4" height="12" fill="#d52b1e"/><path d="M8,2.5l1,1.8 1.2,-.5-.4,2.6 1.1,-.8.3,1-1.6,.5.2,1H8.2V9.5H7.8V8.1H6.2l.2-1-1.6-.5.3-1 1.1.8-.4-2.6 1.2.5z" fill="#d52b1e"/></svg><div class="a" style="left:49.20px;top:71.82px;font-size:12.9px;line-height:12.9px;color:#fff;font-family:'Liberation Mono',monospace;font-weight:normal;-webkit-text-stroke:.25px #fff;"><span class="sx" style="transform:scaleX(0.78);transform-origin:0 0">CA</span></div><svg class="a" style="left:103.4px;top:70.8px" width="16" height="12" viewBox="0 0 16 12"><rect width="16" height="4" fill="#000"/><rect y="4" width="16" height="4" fill="#dd0000"/><rect y="8" width="16" height="4" fill="#ffce00"/></svg><div class="a" style="left:127.10px;top:71.82px;font-size:12.9px;line-height:12.9px;color:#fff;font-family:'Liberation Mono',monospace;font-weight:normal;-webkit-text-stroke:.25px #fff;"><span class="sx" style="transform:scaleX(0.78);transform-origin:0 0">DE</span></div><div class="a" style="left:167.90px;top:71.82px;font-size:12.9px;line-height:12.9px;color:#fff;font-family:'Liberation Mono',monospace;font-weight:normal;-webkit-text-stroke:.25px #fff;"><span class="sx" style="transform:scaleX(0.78);transform-origin:0 0">Network</span></div><div class="a" style="left:319.50px;top:71.82px;font-size:12.9px;line-height:12.9px;color:#fff;font-family:'Liberation Mono',monospace;font-weight:normal;-webkit-text-stroke:.25px #fff;"><span class="sx" style="transform:scaleX(0.78);transform-origin:0 0">Attack on 8900/tcp</span></div><div class="a" style="right:12.50px;top:71.82px;font-size:12.9px;line-height:12.9px;color:#fff;font-family:'Liberation Mono',monospace;font-weight:normal;-webkit-text-stroke:.25px #fff;"><span class="sx" style="transform:scaleX(0.78);transform-origin:100% 0">15:42:06</span></div><svg class="a" style="left:25.4px;top:97.8px" width="16" height="12" viewBox="0 0 16 12"><rect width="16" height="12" fill="#da251d"/><polygon points="8.00,3.30 8.71,5.33 10.85,5.37 9.14,6.67 9.76,8.73 8.00,7.50 6.24,8.73 6.86,6.67 5.15,5.37 7.29,5.33" fill="#ffff00"/></svg><div class="a" style="left:49.20px;top:98.82px;font-size:12.9px;line-height:12.9px;color:#fff;font-family:'Liberation Mono',monospace;font-weight:normal;-webkit-text-stroke:.25px #fff;"><span class="sx" style="transform:scaleX(0.78);transform-origin:0 0">VN</span></div><svg class="a" style="left:103.4px;top:97.8px" width="16" height="12" viewBox="0 0 16 12"><rect width="16" height="12" fill="#fff"/><rect width="16" height="3.6" fill="#000"/><rect y="4.4" width="16" height="3.2" fill="#bb0000"/><rect y="8.4" width="16" height="3.6" fill="#006600"/><ellipse cx="8" cy="6" rx="1.6" ry="3.6" fill="#bb0000" stroke="#fff" stroke-width=".4"/><path d="M8,2.6V9.4" stroke="#000" stroke-width=".6"/></svg><div class="a" style="left:127.10px;top:98.82px;font-size:12.9px;line-height:12.9px;color:#fff;font-family:'Liberation Mono',monospace;font-weight:normal;-webkit-text-stroke:.25px #fff;"><span class="sx" style="transform:scaleX(0.78);transform-origin:0 0">KE</span></div><div class="a" style="left:167.90px;top:98.82px;font-size:12.9px;line-height:12.9px;color:#fff;font-family:'Liberation Mono',monospace;font-weight:normal;-webkit-text-stroke:.25px #fff;"><span class="sx" style="transform:scaleX(0.78);transform-origin:0 0">Network</span></div><div class="a" style="left:319.50px;top:98.82px;font-size:12.9px;line-height:12.9px;color:#fff;font-family:'Liberation Mono',monospace;font-weight:normal;-webkit-text-stroke:.25px #fff;"><span class="sx" style="transform:scaleX(0.78);transform-origin:0 0">Attack on 0/tcp</span></div><div class="a" style="right:12.50px;top:98.82px;font-size:12.9px;line-height:12.9px;color:#fff;font-family:'Liberation Mono',monospace;font-weight:normal;-webkit-text-stroke:.25px #fff;"><span class="sx" style="transform:scaleX(0.78);transform-origin:100% 0">15:42:06</span></div><svg class="a" style="left:25.4px;top:124.8px" width="16" height="12" viewBox="0 0 16 12"><rect width="16" height="12" fill="#229e45"/><polygon points="8,1.5 14.5,6 8,10.5 1.5,6" fill="#f8e509"/><circle cx="8" cy="6" r="2.7" fill="#2b49a3"/><path d="M5.5,5.5q2.5,-.6 5,.8" stroke="#fff" stroke-width=".5" fill="none"/></svg><div class="a" style="left:49.20px;top:125.82px;font-size:12.9px;line-height:12.9px;color:#fff;font-family:'Liberation Mono',monospace;font-weight:normal;-webkit-text-stroke:.25px #fff;"><span class="sx" style="transform:scaleX(0.78);transform-origin:0 0">BR</span></div><svg class="a" style="left:103.4px;top:124.8px" width="16" height="12" viewBox="0 0 16 12"><rect width="16" height="4" fill="#000"/><rect y="4" width="16" height="4" fill="#dd0000"/><rect y="8" width="16" height="4" fill="#ffce00"/></svg><div class="a" style="left:127.10px;top:125.82px;font-size:12.9px;line-height:12.9px;color:#fff;font-family:'Liberation Mono',monospace;font-weight:normal;-webkit-text-stroke:.25px #fff;"><span class="sx" style="transform:scaleX(0.78);transform-origin:0 0">DE</span></div><div class="a" style="left:167.90px;top:125.82px;font-size:12.9px;line-height:12.9px;color:#fff;font-family:'Liberation Mono',monospace;font-weight:normal;-webkit-text-stroke:.25px #fff;"><span class="sx" style="transform:scaleX(0.78);transform-origin:0 0">Network</span></div><div class="a" style="left:319.50px;top:125.82px;font-size:12.9px;line-height:12.9px;color:#fff;font-family:'Liberation Mono',monospace;font-weight:normal;-webkit-text-stroke:.25px #fff;"><span class="sx" style="transform:scaleX(0.78);transform-origin:0 0">Attack on 445/tcp</span></div><div class="a" style="right:12.50px;top:125.82px;font-size:12.9px;line-height:12.9px;color:#fff;font-family:'Liberation Mono',monospace;font-weight:normal;-webkit-text-stroke:.25px #fff;"><span class="sx" style="transform:scaleX(0.78);transform-origin:100% 0">15:42:06</span></div><svg class="a" style="left:25.4px;top:151.8px" width="16" height="12" viewBox="0 0 16 12"><rect width="16" height="12" fill="#00008b"/><g transform="scale(.5)"><path d="M0,0L16,12M16,0L0,12" stroke="#fff" stroke-width="2.4"/><path d="M0,0L16,12M16,0L0,12" stroke="#c8102e" stroke-width=".8"/><path d="M8,0V12M0,6H16" stroke="#fff" stroke-width="3.6"/><path d="M8,0V12M0,6H16" stroke="#c8102e" stroke-width="2"/></g><polygon points="4.00,7.80 4.28,8.61 5.14,8.63 4.46,9.15 4.71,9.97 4.00,9.48 3.29,9.97 3.54,9.15 2.86,8.63 3.72,8.61" fill="#fff"/><polygon points="12.00,2.40 12.14,2.81 12.57,2.81 12.23,3.07 12.35,3.49 12.00,3.24 11.65,3.49 11.77,3.07 11.43,2.81 11.86,2.81" fill="#fff"/><polygon points="13.50,5.40 13.64,5.81 14.07,5.81 13.73,6.07 13.85,6.49 13.50,6.24 13.15,6.49 13.27,6.07 12.93,5.81 13.36,5.81" fill="#fff"/><polygon points="12.00,8.90 12.14,9.31 12.57,9.31 12.23,9.57 12.35,9.99 12.00,9.74 11.65,9.99 11.77,9.57 11.43,9.31 11.86,9.31" fill="#fff"/><polygon points="10.50,5.00 10.62,5.34 10.98,5.35 10.69,5.56 10.79,5.90 10.50,5.70 10.21,5.90 10.31,5.56 10.02,5.35 10.38,5.34" fill="#fff"/></svg><div class="a" style="left:49.20px;top:152.82px;font-size:12.9px;line-height:12.9px;color:#fff;font-family:'Liberation Mono',monospace;font-weight:normal;-webkit-text-stroke:.25px #fff;"><span class="sx" style="transform:scaleX(0.78);transform-origin:0 0">AU</span></div><svg class="a" style="left:103.4px;top:151.8px" width="16" height="12" viewBox="0 0 16 12"><rect width="16" height="4" fill="#fdb913"/><rect y="4" width="16" height="4" fill="#006a44"/><rect y="8" width="16" height="4" fill="#c1272d"/></svg><div class="a" style="left:127.10px;top:152.82px;font-size:12.9px;line-height:12.9px;color:#fff;font-family:'Liberation Mono',monospace;font-weight:normal;-webkit-text-stroke:.25px #fff;"><span class="sx" style="transform:scaleX(0.78);transform-origin:0 0">LT</span></div><div class="a" style="left:167.90px;top:152.82px;font-size:12.9px;line-height:12.9px;color:#fff;font-family:'Liberation Mono',monospace;font-weight:normal;-webkit-text-stroke:.25px #fff;"><span class="sx" style="transform:scaleX(0.78);transform-origin:0 0">SSH/console</span></div><div class="a" style="left:319.50px;top:152.82px;font-size:12.9px;line-height:12.9px;color:#fff;font-family:'Liberation Mono',monospace;font-weight:normal;-webkit-text-stroke:.25px #fff;"><span class="sx" style="transform:scaleX(0.78);transform-origin:0 0">Username: dolphinscheduler | Password: 1 | Status:...</span></div><div class="a" style="right:12.50px;top:152.82px;font-size:12.9px;line-height:12.9px;color:#fff;font-family:'Liberation Mono',monospace;font-weight:normal;-webkit-text-stroke:.25px #fff;"><span class="sx" style="transform:scaleX(0.78);transform-origin:100% 0">15:42:06</span></div><svg class="a" style="left:25.4px;top:178.8px" width="16" height="12" viewBox="0 0 16 12"><rect width="16" height="12" fill="#fff"/><rect width="16" height="3.6" fill="#000"/><rect y="4.4" width="16" height="3.2" fill="#bb0000"/><rect y="8.4" width="16" height="3.6" fill="#006600"/><ellipse cx="8" cy="6" rx="1.6" ry="3.6" fill="#bb0000" stroke="#fff" stroke-width=".4"/><path d="M8,2.6V9.4" stroke="#000" stroke-width=".6"/></svg><div class="a" style="left:49.20px;top:179.82px;font-size:12.9px;line-height:12.9px;color:#fff;font-family:'Liberation Mono',monospace;font-weight:normal;-webkit-text-stroke:.25px #fff;"><span class="sx" style="transform:scaleX(0.78);transform-origin:0 0">KE</span></div><svg class="a" style="left:103.4px;top:178.8px" width="16" height="12" viewBox="0 0 16 12"><rect width="16" height="12" fill="#fff"/><rect width="16" height="3.6" fill="#000"/><rect y="4.4" width="16" height="3.2" fill="#bb0000"/><rect y="8.4" width="16" height="3.6" fill="#006600"/><ellipse cx="8" cy="6" rx="1.6" ry="3.6" fill="#bb0000" stroke="#fff" stroke-width=".4"/><path d="M8,2.6V9.4" stroke="#000" stroke-width=".6"/></svg><div class="a" style="left:127.10px;top:179.82px;font-size:12.9px;line-height:12.9px;color:#fff;font-family:'Liberation Mono',monospace;font-weight:normal;-webkit-text-stroke:.25px #fff;"><span class="sx" style="transform:scaleX(0.78);transform-origin:0 0">KE</span></div><div class="a" style="left:167.90px;top:179.82px;font-size:12.9px;line-height:12.9px;color:#fff;font-family:'Liberation Mono',monospace;font-weight:normal;-webkit-text-stroke:.25px #fff;"><span class="sx" style="transform:scaleX(0.78);transform-origin:0 0">Network</span></div><div class="a" style="left:319.50px;top:179.82px;font-size:12.9px;line-height:12.9px;color:#fff;font-family:'Liberation Mono',monospace;font-weight:normal;-webkit-text-stroke:.25px #fff;"><span class="sx" style="transform:scaleX(0.78);transform-origin:0 0">Attack on 445/tcp</span></div><div class="a" style="right:12.50px;top:179.82px;font-size:12.9px;line-height:12.9px;color:#fff;font-family:'Liberation Mono',monospace;font-weight:normal;-webkit-text-stroke:.25px #fff;"><span class="sx" style="transform:scaleX(0.78);transform-origin:100% 0">15:42:06</span></div><svg class="a" style="left:25.4px;top:205.8px" width="16" height="12" viewBox="0 0 16 12"><rect width="16" height="12" fill="#fff"/><rect y="0.00" width="16" height="0.92" fill="#c8313e"/><rect y="1.85" width="16" height="0.92" fill="#c8313e"/><rect y="3.69" width="16" height="0.92" fill="#c8313e"/><rect y="5.54" width="16" height="0.92" fill="#c8313e"/><rect y="7.38" width="16" height="0.92" fill="#c8313e"/><rect y="9.23" width="16" height="0.92" fill="#c8313e"/><rect y="11.08" width="16" height="0.92" fill="#c8313e"/><rect width="7" height="6.5" fill="#3b3b6d"/><path d="M1,1.2h5M1,2.7h5M1,4.2h5M1,5.5h5" stroke="#9a9ac0" stroke-width=".5"/></svg><div class="a" style="left:49.20px;top:206.82px;font-size:12.9px;line-height:12.9px;color:#fff;font-family:'Liberation Mono',monospace;font-weight:normal;-webkit-text-stroke:.25px #fff;"><span class="sx" style="transform:scaleX(0.78);transform-origin:0 0">US</span></div><svg class="a" style="left:103.4px;top:205.8px" width="16" height="12" viewBox="0 0 16 12"><rect width="16" height="12" fill="#229e45"/><polygon points="8,1.5 14.5,6 8,10.5 1.5,6" fill="#f8e509"/><circle cx="8" cy="6" r="2.7" fill="#2b49a3"/><path d="M5.5,5.5q2.5,-.6 5,.8" stroke="#fff" stroke-width=".5" fill="none"/></svg><div class="a" style="left:127.10px;top:206.82px;font-size:12.9px;line-height:12.9px;color:#fff;font-family:'Liberation Mono',monospace;font-weight:normal;-webkit-text-stroke:.25px #fff;"><span class="sx" style="transform:scaleX(0.78);transform-origin:0 0">BR</span></div><div class="a" style="left:167.90px;top:206.82px;font-size:12.9px;line-height:12.9px;color:#fff;font-family:'Liberation Mono',monospace;font-weight:normal;-webkit-text-stroke:.25px #fff;"><span class="sx" style="transform:scaleX(0.78);transform-origin:0 0">Passwords</span></div><div class="a" style="left:319.50px;top:206.82px;font-size:12.9px;line-height:12.9px;color:#fff;font-family:'Liberation Mono',monospace;font-weight:normal;-webkit-text-stroke:.25px #fff;"><span class="sx" style="transform:scaleX(0.78);transform-origin:0 0">Username: | Password:</span></div><div class="a" style="right:12.50px;top:206.82px;font-size:12.9px;line-height:12.9px;color:#fff;font-family:'Liberation Mono',monospace;font-weight:normal;-webkit-text-stroke:.25px #fff;"><span class="sx" style="transform:scaleX(0.78);transform-origin:100% 0">15:42:06</span></div><svg class="a" style="left:25.4px;top:232.8px" width="16" height="12" viewBox="0 0 16 12"><rect width="16" height="12" fill="#ee1c25"/><polygon points="3.00,1.20 3.42,2.42 4.71,2.44 3.68,3.22 4.06,4.46 3.00,3.72 1.94,4.46 2.32,3.22 1.29,2.44 2.58,2.42" fill="#ffff00"/><polygon points="5.80,0.90 5.94,1.31 6.37,1.31 6.03,1.57 6.15,1.99 5.80,1.74 5.45,1.99 5.57,1.57 5.23,1.31 5.66,1.31" fill="#ff0"/><polygon points="6.80,2.20 6.94,2.61 7.37,2.61 7.03,2.87 7.15,3.29 6.80,3.04 6.45,3.29 6.57,2.87 6.23,2.61 6.66,2.61" fill="#ff0"/><polygon points="6.80,3.80 6.94,4.21 7.37,4.21 7.03,4.47 7.15,4.89 6.80,4.64 6.45,4.89 6.57,4.47 6.23,4.21 6.66,4.21" fill="#ff0"/><polygon points="5.80,5.00 5.94,5.41 6.37,5.41 6.03,5.67 6.15,6.09 5.80,5.84 5.45,6.09 5.57,5.67 5.23,5.41 5.66,5.41" fill="#ff0"/></svg><div class="a" style="left:49.20px;top:233.82px;font-size:12.9px;line-height:12.9px;color:#fff;font-family:'Liberation Mono',monospace;font-weight:normal;-webkit-text-stroke:.25px #fff;"><span class="sx" style="transform:scaleX(0.78);transform-origin:0 0">CN</span></div><svg class="a" style="left:103.4px;top:232.8px" width="16" height="12" viewBox="0 0 16 12"><rect width="16" height="4" fill="#fdb913"/><rect y="4" width="16" height="4" fill="#006a44"/><rect y="8" width="16" height="4" fill="#c1272d"/></svg><div class="a" style="left:127.10px;top:233.82px;font-size:12.9px;line-height:12.9px;color:#fff;font-family:'Liberation Mono',monospace;font-weight:normal;-webkit-text-stroke:.25px #fff;"><span class="sx" style="transform:scaleX(0.78);transform-origin:0 0">LT</span></div><div class="a" style="left:167.90px;top:233.82px;font-size:12.9px;line-height:12.9px;color:#fff;font-family:'Liberation Mono',monospace;font-weight:normal;-webkit-text-stroke:.25px #fff;"><span class="sx" style="transform:scaleX(0.78);transform-origin:0 0">SSH/console</span></div><div class="a" style="left:319.50px;top:233.82px;font-size:12.9px;line-height:12.9px;color:#fff;font-family:'Liberation Mono',monospace;font-weight:normal;-webkit-text-stroke:.25px #fff;"><span class="sx" style="transform:scaleX(0.78);transform-origin:0 0">Username: | Password:</span></div><div class="a" style="right:12.50px;top:233.82px;font-size:12.9px;line-height:12.9px;color:#fff;font-family:'Liberation Mono',monospace;font-weight:normal;-webkit-text-stroke:.25px #fff;"><span class="sx" style="transform:scaleX(0.78);transform-origin:100% 0">15:42:06</span></div><svg class="a" style="left:25.4px;top:259.8px" width="16" height="12" viewBox="0 0 16 12"><rect width="5.34" height="12" fill="#006847"/><rect x="5.33" width="5.34" height="12" fill="#fff"/><rect x="10.66" width="5.34" height="12" fill="#ce1126"/><circle cx="8" cy="6" r="1.3" fill="#8b5a2b"/></svg><div class="a" style="left:49.20px;top:260.82px;font-size:12.9px;line-height:12.9px;color:#fff;font-family:'Liberation Mono',monospace;font-weight:normal;-webkit-text-stroke:.25px #fff;"><span class="sx" style="transform:scaleX(0.78);transform-origin:0 0">MX</span></div><svg class="a" style="left:103.4px;top:259.8px" width="16" height="12" viewBox="0 0 16 12"><rect width="16" height="12" fill="#fff"/><rect width="16" height="3.6" fill="#000"/><rect y="4.4" width="16" height="3.2" fill="#bb0000"/><rect y="8.4" width="16" height="3.6" fill="#006600"/><ellipse cx="8" cy="6" rx="1.6" ry="3.6" fill="#bb0000" stroke="#fff" stroke-width=".4"/><path d="M8,2.6V9.4" stroke="#000" stroke-width=".6"/></svg><div class="a" style="left:127.10px;top:260.82px;font-size:12.9px;line-height:12.9px;color:#fff;font-family:'Liberation Mono',monospace;font-weight:normal;-webkit-text-stroke:.25px #fff;"><span class="sx" style="transform:scaleX(0.78);transform-origin:0 0">KE</span></div><div class="a" style="left:167.90px;top:260.82px;font-size:12.9px;line-height:12.9px;color:#fff;font-family:'Liberation Mono',monospace;font-weight:normal;-webkit-text-stroke:.25px #fff;"><span class="sx" style="transform:scaleX(0.78);transform-origin:0 0">SSH/console</span></div><div class="a" style="left:319.50px;top:260.82px;font-size:12.9px;line-height:12.9px;color:#fff;font-family:'Liberation Mono',monospace;font-weight:normal;-webkit-text-stroke:.25px #fff;"><span class="sx" style="transform:scaleX(0.78);transform-origin:0 0">Username: | Password:</span></div><div class="a" style="right:12.50px;top:260.82px;font-size:12.9px;line-height:12.9px;color:#fff;font-family:'Liberation Mono',monospace;font-weight:normal;-webkit-text-stroke:.25px #fff;"><span class="sx" style="transform:scaleX(0.78);transform-origin:100% 0">15:42:06</span></div><svg class="a" style="left:25.4px;top:286.8px" width="16" height="12" viewBox="0 0 16 12"><rect width="16" height="12" fill="#de2910"/><circle cx="8" cy="6" r="2.8" fill="#fff"/><circle cx="8" cy="6" r="1.2" fill="#de2910"/></svg><div class="a" style="left:49.20px;top:287.82px;font-size:12.9px;line-height:12.9px;color:#fff;font-family:'Liberation Mono',monospace;font-weight:normal;-webkit-text-stroke:.25px #fff;"><span class="sx" style="transform:scaleX(0.78);transform-origin:0 0">HK</span></div><svg class="a" style="left:103.4px;top:286.8px" width="16" height="12" viewBox="0 0 16 12"><rect width="16" height="12" fill="#1eb53a"/><polygon points="16,0 16,12 0,12" fill="#00a3dd"/><path d="M0,12L16,0" stroke="#fcd116" stroke-width="4.6"/><path d="M0,12L16,0" stroke="#000" stroke-width="3"/></svg><div class="a" style="left:127.10px;top:287.82px;font-size:12.9px;line-height:12.9px;color:#fff;font-family:'Liberation Mono',monospace;font-weight:normal;-webkit-text-stroke:.25px #fff;"><span class="sx" style="transform:scaleX(0.78);transform-origin:0 0">TZ</span></div><div class="a" style="left:167.90px;top:287.82px;font-size:12.9px;line-height:12.9px;color:#fff;font-family:'Liberation Mono',monospace;font-weight:normal;-webkit-text-stroke:.25px #fff;"><span class="sx" style="transform:scaleX(0.78);transform-origin:0 0">Network</span></div><div class="a" style="left:319.50px;top:287.82px;font-size:12.9px;line-height:12.9px;color:#fff;font-family:'Liberation Mono',monospace;font-weight:normal;-webkit-text-stroke:.25px #fff;"><span class="sx" style="transform:scaleX(0.78);transform-origin:0 0">Attack on 8306/tcp</span></div><div class="a" style="right:12.50px;top:287.82px;font-size:12.9px;line-height:12.9px;color:#fff;font-family:'Liberation Mono',monospace;font-weight:normal;-webkit-text-stroke:.25px #fff;"><span class="sx" style="transform:scaleX(0.78);transform-origin:100% 0">15:42:06</span></div><svg class="a" style="left:25.4px;top:313.8px" width="16" height="12" viewBox="0 0 16 12"><rect width="16" height="12" fill="#fff"/><rect y="0.00" width="16" height="0.92" fill="#c8313e"/><rect y="1.85" width="16" height="0.92" fill="#c8313e"/><rect y="3.69" width="16" height="0.92" fill="#c8313e"/><rect y="5.54" width="16" height="0.92" fill="#c8313e"/><rect y="7.38" width="16" height="0.92" fill="#c8313e"/><rect y="9.23" width="16" height="0.92" fill="#c8313e"/><rect y="11.08" width="16" height="0.92" fill="#c8313e"/><rect width="7" height="6.5" fill="#3b3b6d"/><path d="M1,1.2h5M1,2.7h5M1,4.2h5M1,5.5h5" stroke="#9a9ac0" stroke-width=".5"/></svg><div class="a" style="left:49.20px;top:314.82px;font-size:12.9px;line-height:12.9px;color:#fff;font-family:'Liberation Mono',monospace;font-weight:normal;-webkit-text-stroke:.25px #fff;"><span class="sx" style="transform:scaleX(0.78);transform-origin:0 0">US</span></div><svg class="a" style="left:103.4px;top:313.8px" width="16" height="12" viewBox="0 0 16 12"><rect width="16" height="4" fill="#000"/><rect y="4" width="16" height="4" fill="#dd0000"/><rect y="8" width="16" height="4" fill="#ffce00"/></svg><div class="a" style="left:127.10px;top:314.82px;font-size:12.9px;line-height:12.9px;color:#fff;font-family:'Liberation Mono',monospace;font-weight:normal;-webkit-text-stroke:.25px #fff;"><span class="sx" style="transform:scaleX(0.78);transform-origin:0 0">DE</span></div><div class="a" style="left:167.90px;top:314.82px;font-size:12.9px;line-height:12.9px;color:#fff;font-family:'Liberation Mono',monospace;font-weight:normal;-webkit-text-stroke:.25px #fff;"><span class="sx" style="transform:scaleX(0.78);transform-origin:0 0">Network</span></div><div class="a" style="left:319.50px;top:314.82px;font-size:12.9px;line-height:12.9px;color:#fff;font-family:'Liberation Mono',monospace;font-weight:normal;-webkit-text-stroke:.25px #fff;"><span class="sx" style="transform:scaleX(0.78);transform-origin:0 0">Attack on 445/tcp</span></div><div class="a" style="right:12.50px;top:314.82px;font-size:12.9px;line-height:12.9px;color:#fff;font-family:'Liberation Mono',monospace;font-weight:normal;-webkit-text-stroke:.25px #fff;"><span class="sx" style="transform:scaleX(0.78);transform-origin:100% 0">15:42:06</span></div><svg class="a" style="left:502.7px;top:9.5px" width="15" height="15" viewBox="0 0 15 15"><circle cx="7.5" cy="7.5" r="6.6" fill="none" stroke="#fff" stroke-width="1.1"/><rect x="5.6" y="5.1" width="1.2" height="4.8" fill="#fff"/><rect x="8.2" y="5.1" width="1.2" height="4.8" fill="#fff"/></svg><div class="a" style="left:0;top:306.5px;width:851px;height:14px;background:linear-gradient(rgba(29,29,31,.55),rgba(29,29,31,1))"></div></div><div class="a" style="left:898.0px;top:542.5px;width:852.0px;height:320.3px;border:1.5px solid #6c6c6e;border-radius:3px"></div>
</body></html>
